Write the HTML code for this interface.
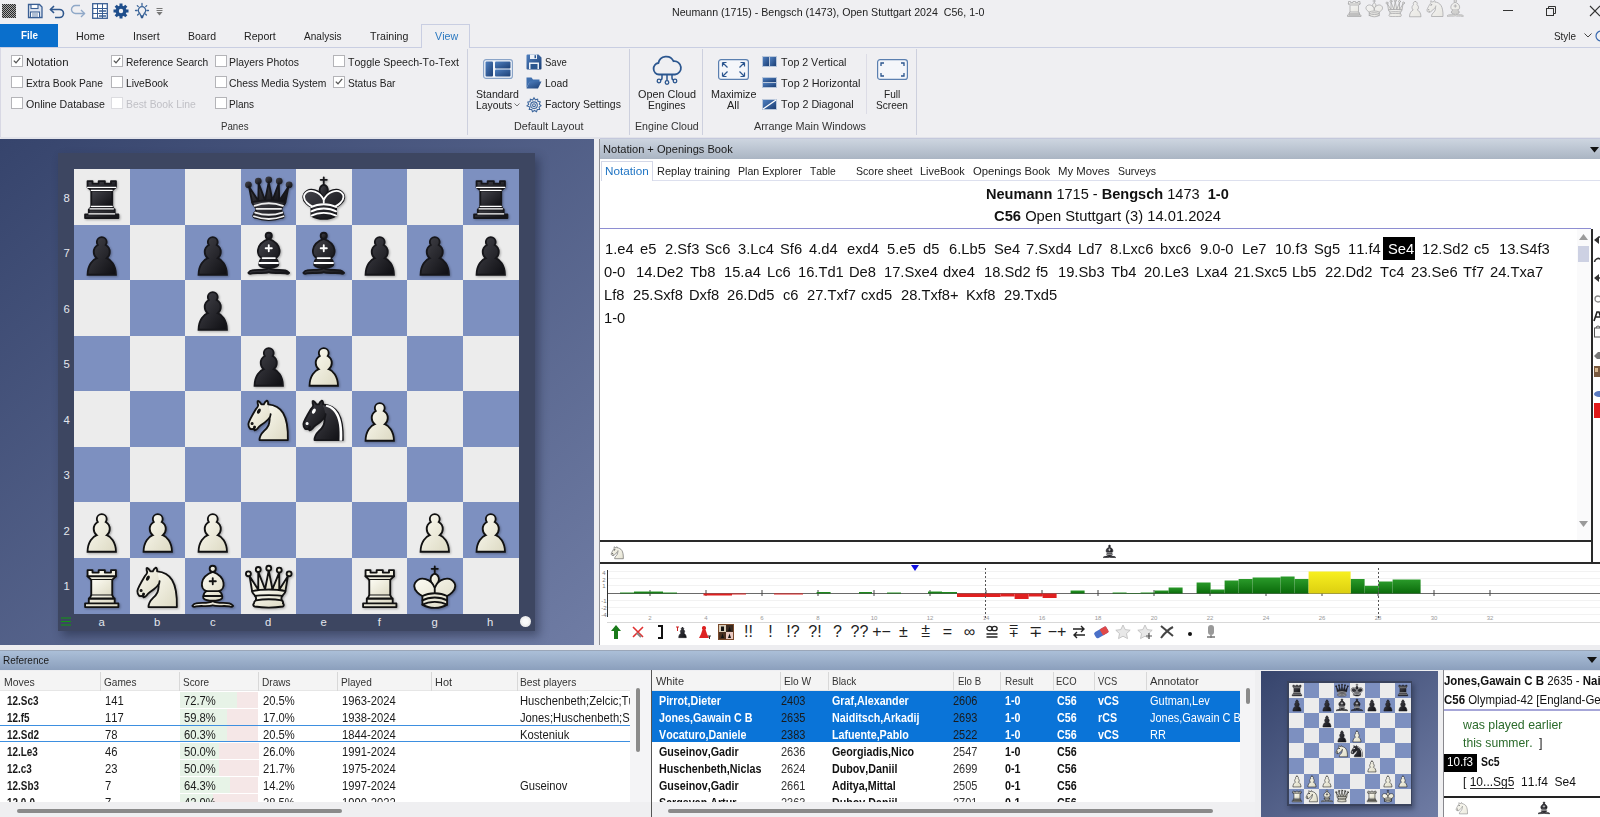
<!DOCTYPE html><html><head><meta charset="utf-8"><style>
*{margin:0;padding:0;box-sizing:border-box}
html,body{width:1600px;height:817px;overflow:hidden;background:#efeff2;font-family:"Liberation Sans",sans-serif;color:#222}
body{position:relative}
div{position:absolute}
.T{white-space:nowrap;line-height:1;transform-origin:0 0;font-kerning:none}
.T b{font-weight:bold}
svg{position:absolute;overflow:visible}
.cb{width:12px;height:12px;border:1px solid #b4b4b8;background:#fff}
</style></head><body><svg width="0" height="0" style="position:absolute"><defs><linearGradient id="gW" x1="0" y1="0" x2="1" y2="1"><stop offset="0" stop-color="#fdfcf4"/><stop offset="1" stop-color="#dcd9c2"/></linearGradient><linearGradient id="gB" x1="0" y1="0" x2="1" y2="1"><stop offset="0" stop-color="#45454c"/><stop offset="1" stop-color="#0e0e12"/></linearGradient><symbol id="wK" viewBox="0 0 45 45"><g fill="none" fill-rule="evenodd" stroke="#111" stroke-linecap="round" stroke-linejoin="round" stroke-width="1.5">
<path stroke-linejoin="miter" d="M22.5 11.63V6M20 8h5"/>
<path fill="url(#gW)" stroke-linecap="butt" stroke-linejoin="miter" d="M22.5 25s4.5-7.5 3-10.5c0 0-1-2.5-3-2.5s-3 2.5-3 2.5c-1.5 3 3 10.5 3 10.5"/>
<path fill="url(#gW)" d="M12.5 37c5.5 3.5 14.5 3.5 20 0v-7s9-4.5 6-10.5c-4-6.5-13.5-3.5-16 4V27v-3.5c-2.5-7.5-12-10.5-16-4-3 6 6 10.5 6 10.5v7"/>
<path d="M12.5 30c5.5-3 14.5-3 20 0m-20 3.5c5.5-3 14.5-3 20 0m-20 3.5c5.5-3 14.5-3 20 0"/></g></symbol><symbol id="wQ" viewBox="0 0 45 45"><g fill="url(#gW)" fill-rule="evenodd" stroke="#111" stroke-linecap="round" stroke-linejoin="round" stroke-width="1.5">
<path d="M8 12a2 2 0 1 1-4 0 2 2 0 1 1 4 0zm16.5-4.5a2 2 0 1 1-4 0 2 2 0 1 1 4 0zM41 12a2 2 0 1 1-4 0 2 2 0 1 1 4 0zM16 8.5a2 2 0 1 1-4 0 2 2 0 1 1 4 0zM33 9a2 2 0 1 1-4 0 2 2 0 1 1 4 0z"/>
<path stroke-linecap="butt" d="M9 26c8.5-1.5 21-1.5 27 0l2-12-7 11V11l-5.5 13.5-3-15-3 15-5.5-14V25L7 14l2 12z"/>
<path stroke-linecap="butt" d="M9 26c0 2 1.5 2 2.5 4 1 1.5 1 1 .5 3.5-1.5 1-1.5 2.5-1.5 2.5-1.5 1.5.5 2.5.5 2.5 6.5 1 16.5 1 23 0 0 0 1.5-1 0-2.5 0 0 .5-1.5-1-2.5-.5-2.5-.5-2 .5-3.5 1-2 2.5-2 2.5-4-8.5-1.5-18.5-1.5-27 0z"/>
<path fill="none" d="M11.5 30c3.5-1 18.5-1 22 0M12 33.5c6-1 15-1 21 0"/></g></symbol><symbol id="wR" viewBox="0 0 45 45"><g fill="url(#gW)" fill-rule="evenodd" stroke="#111" stroke-linecap="round" stroke-linejoin="round" stroke-width="1.5">
<path stroke-linecap="butt" d="M9 39h27v-3H9v3zm3-3v-4h21v4H12zm-1-22V9h4v2h5V9h5v2h5V9h4v5"/>
<path d="m34 14-3 3H14l-3-3"/>
<path stroke-linecap="butt" stroke-linejoin="miter" d="M31 17v12.5H14V17"/>
<path d="m31 29.5 1.5 2.5h-20l1.5-2.5"/>
<path fill="none" stroke-linejoin="miter" d="M11 14h23"/></g></symbol><symbol id="wB" viewBox="0 0 45 45"><g fill="none" fill-rule="evenodd" stroke="#111" stroke-linecap="round" stroke-linejoin="round" stroke-width="1.5">
<g fill="url(#gW)" stroke-linecap="butt">
<path d="M9 36c3.39-.97 10.11.43 13.5-2 3.39 2.430 10.11 1.030 13.5 2 0 0 1.65.54 3 2-.68.97-1.650.99-3 .5-3.39-.97-10.11.46-13.5-1-3.39 1.46-10.11.03-13.5 1-1.354.49-2.323.47-3-.5 1.354-1.94 3-2 3-2z"/>
<path d="M15 32c2.5 2.5 12.5 2.5 15 0 .5-1.5 0-2 0-2 0-2.5-2.5-4-2.5-4 5.5-1.5 6-11.5-5-15.5-11 4-10.5 14-5 15.5 0 0-2.5 1.5-2.5 4 0 0-.5.5 0 2z"/>
<path d="M25 8a2.5 2.5 0 1 1-5 0 2.5 2.5 0 1 1 5 0z"/></g>
<path stroke-linejoin="miter" d="M17.5 26h10M15 30h15m-7.5-14.5v5M20 18h5"/></g></symbol><symbol id="wN" viewBox="0 0 45 45"><g fill="none" fill-rule="evenodd" stroke="#111" stroke-linecap="round" stroke-linejoin="round" stroke-width="1.5">
<path fill="url(#gW)" d="M22 10c10.5 1 16.5 8 16 29H15c0-9 10-6.5 8-21"/>
<path fill="url(#gW)" d="M24 18c.38 2.91-5.55 7.37-8 9-3 2-2.82 4.34-5 4-1.042-.94 1.41-3.04 0-3-1 0 .19 1.23-1 2-1 0-4.003 1-4-4 0-2 6-12 6-12s1.89-1.9 2-3.5c-.73-.994-.5-2-.5-3 1-1 3 2.5 3 2.5h2s.78-1.992 2.5-3c1 0 1 3 1 3"/>
<path fill="#111" d="M9.5 25.5a.5.5 0 1 1-1 0 .5.5 0 1 1 1 0zm5.433-9.75a.5 1.5 30 1 1-.866-.5.5 1.5 30 1 1 .866.5z"/></g></symbol><symbol id="wP" viewBox="0 0 45 45"><path fill="url(#gW)" stroke="#111" stroke-linecap="round" stroke-width="1.5" d="M22.5 9c-2.21 0-4 1.79-4 4 0 .89.29 1.71.78 2.38C17.33 16.5 16 18.59 16 21c0 2.03.94 3.84 2.410 5.03C15.41 27.09 11 31.58 11 39.5H34c0-7.920-4.410-12.41-7.410-13.47C28.06 24.84 29 23.03 29 21c0-2.41-1.33-4.5-3.28-5.62.49-.67.78-1.49.78-2.38 0-2.210-1.79-4-4-4z"/></symbol><symbol id="bK" viewBox="0 0 45 45"><g fill="none" fill-rule="evenodd" stroke="#16161a" stroke-linecap="round" stroke-linejoin="round" stroke-width="1.5">
<path stroke-linejoin="miter" d="M22.5 11.63V6"/>
<path fill="url(#gB)" stroke-linecap="butt" stroke-linejoin="miter" d="M22.5 25s4.5-7.5 3-10.5c0 0-1-2.5-3-2.5s-3 2.5-3 2.5c-1.5 3 3 10.5 3 10.5"/>
<path fill="url(#gB)" d="M12.5 37c5.5 3.5 14.5 3.5 20 0v-7s9-4.5 6-10.5c-4-6.5-13.5-3.5-16 4V27v-3.5c-2.5-7.5-12-10.5-16-4-3 6 6 10.5 6 10.5v7"/>
<path stroke-linejoin="miter" d="M20 8h5"/>
<path stroke="#fff" d="M32 29.5s8.5-4 6.03-9.65C34.15 14 25 18 22.5 24.5v2.1-2.1C20 18 10.85 14 6.97 19.85 4.5 25.5 13 29.5 13 29.5"/>
<path stroke="#fff" d="M12.5 30c5.5-3 14.5-3 20 0m-20 3.5c5.5-3 14.5-3 20 0m-20 3.5c5.5-3 14.5-3 20 0"/></g></symbol><symbol id="bQ" viewBox="0 0 45 45"><g fill="url(#gB)" fill-rule="evenodd" stroke="#16161a" stroke-linecap="round" stroke-linejoin="round" stroke-width="1.5">
<g stroke="none"><circle cx="6" cy="12" r="2.75"/><circle cx="14" cy="9" r="2.75"/><circle cx="22.5" cy="8" r="2.75"/><circle cx="31" cy="9" r="2.75"/><circle cx="39" cy="12" r="2.75"/></g>
<path stroke-linecap="butt" d="M9 26c8.5-1.5 21-1.5 27 0l2.5-12.5L31 25l-.3-14.1-5.2 13.6-3-14.5-3 14.5-5.2-13.6L14 25 6.5 13.5 9 26z"/>
<path stroke-linecap="butt" d="M9 26c0 2 1.5 2 2.5 4 1 1.5 1 1 .5 3.5-1.5 1-1.5 2.5-1.5 2.5-1.5 1.5.5 2.5.5 2.5 6.5 1 16.5 1 23 0 0 0 1.5-1 0-2.5 0 0 .5-1.5-1-2.5-.5-2.5-.5-2 .5-3.5 1-2 2.5-2 2.5-4-8.5-1.5-18.5-1.5-27 0z"/>
<path fill="none" stroke-linecap="butt" d="M11 38.5a35 35 1 0 0 23 0"/>
<path fill="none" stroke="#ececec" d="M11 29a35 35 1 0 1 23 0m-21.5 2.5h20m-21 3a35 35 1 0 0 22 0m-23 3a35 35 1 0 0 24 0"/></g></symbol><symbol id="bR" viewBox="0 0 45 45"><g fill="url(#gB)" fill-rule="evenodd" stroke="#16161a" stroke-linecap="round" stroke-linejoin="round" stroke-width="1.5">
<path stroke-linecap="butt" d="M9 39h27v-3H9v3zm3.5-7 1.5-2.5h17l1.5 2.5h-20zm-.5 4v-4h21v4H12z"/>
<path stroke-linecap="butt" stroke-linejoin="miter" d="M14 29.5v-13h17v13H14z"/>
<path stroke-linecap="butt" d="M14 16.5 11 14h23l-3 2.5H14zM11 14V9h4v2h5V9h5v2h5V9h4v5H11z"/>
<path fill="none" stroke="#fff" stroke-linejoin="miter" stroke-width="1" d="M12 35.5h21m-20-4h19m-18-2h17m-17-13h17M11 14h23"/></g></symbol><symbol id="bB" viewBox="0 0 45 45"><g fill="none" fill-rule="evenodd" stroke="#16161a" stroke-linecap="round" stroke-linejoin="round" stroke-width="1.5">
<g fill="url(#gB)" stroke-linecap="butt">
<path d="M9 36c3.39-.97 10.11.43 13.5-2 3.39 2.43 10.11 1.03 13.5 2 0 0 1.65.54 3 2-.68.97-1.65.99-3 .5-3.39-.97-10.11.46-13.5-1-3.39 1.46-10.11.03-13.5 1-1.354.49-2.323.47-3-.5 1.354-1.94 3-2 3-2z"/>
<path d="M15 32c2.5 2.5 12.5 2.5 15 0 .5-1.5 0-2 0-2 0-2.5-2.5-4-2.5-4 5.5-1.5 6-11.5-5-15.5-11 4-10.5 14-5 15.5 0 0-2.5 1.5-2.5 4 0 0-.5.5 0 2z"/>
<path d="M25 8a2.5 2.5 0 1 1-5 0 2.5 2.5 0 1 1 5 0z"/></g>
<path stroke="#fff" stroke-linejoin="miter" d="M17.5 26h10M15 30h15m-7.5-14.5v5M20 18h5"/></g></symbol><symbol id="bN" viewBox="0 0 45 45"><g fill="none" fill-rule="evenodd" stroke="#16161a" stroke-linecap="round" stroke-linejoin="round" stroke-width="1.5">
<path fill="url(#gB)" d="M22 10c10.5 1 16.5 8 16 29H15c0-9 10-6.5 8-21"/>
<path fill="url(#gB)" d="M24 18c.38 2.91-5.55 7.37-8 9-3 2-2.82 4.34-5 4-1.042-.94 1.41-3.04 0-3-1 0 .19 1.23-1 2-1 0-4.003 1-4-4 0-2 6-12 6-12s1.89-1.9 2-3.5c-.73-.994-.5-2-.5-3 1-1 3 2.5 3 2.5h2s.78-1.992 2.5-3c1 0 1 3 1 3"/>
<path fill="#fff" stroke="#fff" d="M9.5 25.5a.5.5 0 1 1-1 0 .5.5 0 1 1 1 0zm5.433-9.75a.5 1.5 30 1 1-.866-.5.5 1.5 30 1 1 .866.5z"/>
<path fill="#fff" stroke="none" d="m24.55 10.4-.45 1.45.5.15c3.15 1 5.65 2.49 7.9 6.75S35.75 29.06 35.250 39l-.05.5h2.25l.05-.5c.5-10.06-.88-16.85-3.25-21.34-2.37-4.49-5.79-6.64-9.19-7.16l-.51-.1z"/></g></symbol><symbol id="bP" viewBox="0 0 45 45"><path fill="url(#gB)" stroke="#16161a" stroke-linecap="round" stroke-width="1.5" d="M22.5 9c-2.21 0-4 1.79-4 4 0 .89.29 1.71.78 2.38C17.33 16.5 16 18.59 16 21c0 2.03.94 3.84 2.41 5.03C15.41 27.09 11 31.58 11 39.5H34c0-7.92-4.41-12.41-7.41-13.47C28.06 24.84 29 23.03 29 21c0-2.41-1.33-4.5-3.28-5.62.49-.67.78-1.49.78-2.38 0-2.21-1.79-4-4-4z"/></symbol></defs></svg><svg style="left:2px;top:4px" width="14" height="14"><defs><pattern id="chk" width="2" height="2" patternUnits="userSpaceOnUse"><rect width="2" height="2" fill="#a8a8a8"/><rect width="1" height="1" fill="#2a2a2a"/><rect x="1" y="1" width="1" height="1" fill="#2a2a2a"/></pattern></defs><rect width="14" height="14" fill="url(#chk)"/></svg><svg style="left:27px;top:3px;" width="16" height="16" viewBox="0 0 16 16"><path d="M1.5 1.5h11l2.5 2.5v10.5h-13.5z" fill="#dde4f0" stroke="#3a5f94" stroke-width="1.3"/><rect x="4" y="1.5" width="7" height="4" fill="#fff" stroke="#3a5f94" stroke-width="1.1"/><rect x="3.5" y="9" width="9" height="5.5" fill="#fff" stroke="#3a5f94" stroke-width="1.1"/><path d="M5 11h6M5 13h6" stroke="#3a5f94" stroke-width="0.8"/></svg><svg style="left:49px;top:4px;" width="16" height="14" viewBox="0 0 16 14"><path d="M5 2L1.5 5.5 5 9" fill="none" stroke="#2f578d" stroke-width="1.6"/><path d="M1.5 5.5h9a4 4 0 0 1 0 8H6" fill="none" stroke="#2f578d" stroke-width="1.6"/></svg><svg style="left:70px;top:4px;" width="16" height="14" viewBox="0 0 16 14"><path d="M11 6L14.5 9.5 11 13" fill="none" stroke="#8fa8c8" stroke-width="1.4"/><path d="M14.5 9.5h-9a4 4 0 0 1 0-8H10" fill="none" stroke="#8fa8c8" stroke-width="1.4"/></svg><svg style="left:92px;top:3px;" width="16" height="16" viewBox="0 0 16 16"><rect x="0.7" y="0.7" width="14.6" height="14.6" fill="#fff" stroke="#3a5f94" stroke-width="1.3"/><path d="M0.7 5.5h14.6M0.7 10.5h14.6M5.5 0.7v14.6M10.5 0.7v14.6" stroke="#3a5f94" stroke-width="1"/><path d="M7 8h7M7 13h7" stroke="#3a5f94" stroke-width="1.3"/></svg><svg style="left:113px;top:3px;" width="16" height="16" viewBox="0 0 16 16"><g fill="#1f4e8c"><circle cx="8" cy="8" r="5.5"/><g stroke="#1f4e8c" stroke-width="3"><path d="M8 0.5v15M0.5 8h15M2.7 2.7l10.6 10.6M13.3 2.7L2.7 13.3"/></g></g><circle cx="8" cy="8" r="2.2" fill="#efeff2"/></svg><svg style="left:134px;top:1px;" width="16" height="19" viewBox="0 0 16 19"><g fill="none" stroke="#3a6499" stroke-width="1.3" stroke-linecap="round"><path d="M5.6 12.2A3.7 3.7 0 1 1 10.4 12.2L9 15H7z"/><path d="M1.5 9.5h1.6M12.9 9.5h1.6M8 2.5v2M3.3 4.6l1 1M12.7 4.6l-1 1M3.6 14l1-1M12.4 14l-1-1"/></g><path d="M6.8 15h2.4v1.5l-1.2 1.3-1.2-1.3z" fill="#2f578d"/></svg><svg style="left:156px;top:8px;" width="7" height="8" viewBox="0 0 7 8"><path d="M0.5 0.5h6M0.5 2.5h6" stroke="#777" stroke-width="1"/><path d="M0.5 4h6L3.5 7.5z" fill="#777"/></svg><div class="T" style="left:672.00px;top:6.76px;font-size:11.5px;color:#222;transform:scaleX(0.9241);white-space:pre">Neumann (1715) - Bengsch (1473), Open Stuttgart 2024  C56, 1-0</div><svg style="left:1343.2px;top:-3.5px;opacity:0.33" width="22.5" height="22.5"><use href="#wR"/></svg><svg style="left:1363.3px;top:-3.5px;opacity:0.33" width="22.5" height="22.5"><use href="#wK"/></svg><svg style="left:1383.5px;top:-3.5px;opacity:0.33" width="22.5" height="22.5"><use href="#wQ"/></svg><svg style="left:1403.5px;top:-3.5px;opacity:0.33" width="22.5" height="22.5"><use href="#wP"/></svg><svg style="left:1423.7px;top:-3.5px;opacity:0.33" width="22.5" height="22.5"><use href="#wN"/></svg><svg style="left:1443.8px;top:-3.5px;opacity:0.33" width="22.5" height="22.5"><use href="#wB"/></svg><div style="left:1503px;top:10px;width:10px;height:1px;background:#333"></div><svg style="left:1546px;top:6px;" width="10" height="10" viewBox="0 0 10 10"><path d="M2.5 2.5V0.5h7v7h-2" fill="none" stroke="#333" stroke-width="1"/><rect x="0.5" y="2.5" width="7" height="7" fill="none" stroke="#333" stroke-width="1"/></svg><svg style="left:1589px;top:5px;" width="12" height="12" viewBox="0 0 12 12"><path d="M1 1l10 10M11 1L1 11" stroke="#333" stroke-width="1.1"/></svg><div style="left:0px;top:47px;width:1600px;height:1px;background:#c9cee2"></div><div style="left:0px;top:24px;width:57.5px;height:23px;background:#0a6fcc"></div><div class="T" style="left:20.70px;top:29.76px;font-size:11.5px;color:#fff;transform:scaleX(0.8570);"><b>File</b></div><div class="T" style="left:76.00px;top:30.93px;font-size:11.3px;color:#222;transform:scaleX(0.9512);">Home</div><div class="T" style="left:132.80px;top:30.93px;font-size:11.3px;color:#222;transform:scaleX(0.9416);">Insert</div><div class="T" style="left:187.50px;top:30.93px;font-size:11.3px;color:#222;transform:scaleX(0.9280);">Board</div><div class="T" style="left:243.75px;top:30.93px;font-size:11.3px;color:#222;transform:scaleX(0.9366);">Report</div><div class="T" style="left:303.75px;top:30.93px;font-size:11.3px;color:#222;transform:scaleX(0.8909);">Analysis</div><div class="T" style="left:369.50px;top:30.93px;font-size:11.3px;color:#222;transform:scaleX(0.9407);">Training</div><div style="left:421px;top:24px;width:49px;height:24px;background:#efeff2;border:1px solid #c9cee2;border-bottom:none"></div><div class="T" style="left:435.00px;top:30.93px;font-size:11.3px;color:#2a78c0;transform:scaleX(0.9467);">View</div><div class="T" style="left:1553.75px;top:30.93px;font-size:11.3px;color:#222;transform:scaleX(0.8750);">Style</div><svg style="left:1595px;top:30px;" width="10" height="12" viewBox="0 0 10 12"><circle cx="6" cy="6" r="5" fill="none" stroke="#3a6ab0" stroke-width="1.2"/></svg><svg style="left:1584px;top:33px;" width="8" height="5" viewBox="0 0 8 5"><path d="M0.5 0.5L4 4 7.5 0.5" fill="none" stroke="#444" stroke-width="1"/></svg><div style="left:0px;top:48px;width:1px;height:89px;background:#d8d8e4"></div><div class="cb" style="left:11px;top:55px;"></div><svg style="left:13px;top:57px;" width="8" height="7" viewBox="0 0 8 7"><path d="M0.8 3.6L3 5.8 7.2 0.8" fill="none" stroke="#555" stroke-width="1.3"/></svg><div class="T" style="left:25.50px;top:56.93px;font-size:11.3px;color:#222;transform:scaleX(1.0097);">Notation</div><div class="cb" style="left:11px;top:76px;"></div><div class="T" style="left:25.50px;top:77.93px;font-size:11.3px;color:#222;transform:scaleX(0.9079);">Extra Book Pane</div><div class="cb" style="left:11px;top:97px;"></div><div class="T" style="left:25.50px;top:98.93px;font-size:11.3px;color:#222;transform:scaleX(0.9384);">Online Database</div><div class="cb" style="left:111px;top:55px;"></div><svg style="left:113px;top:57px;" width="8" height="7" viewBox="0 0 8 7"><path d="M0.8 3.6L3 5.8 7.2 0.8" fill="none" stroke="#555" stroke-width="1.3"/></svg><div class="T" style="left:125.75px;top:56.93px;font-size:11.3px;color:#222;transform:scaleX(0.9031);">Reference Search</div><div class="cb" style="left:111px;top:76px;"></div><div class="T" style="left:125.75px;top:77.93px;font-size:11.3px;color:#222;transform:scaleX(0.9075);">LiveBook</div><div class="cb" style="left:111px;top:97px;border-color:#dcdce0"></div><div class="T" style="left:125.75px;top:98.93px;font-size:11.3px;color:#c0c0c6;transform:scaleX(0.9179);">Best Book Line</div><div class="cb" style="left:214.5px;top:55px;"></div><div class="T" style="left:229.25px;top:56.93px;font-size:11.3px;color:#222;transform:scaleX(0.9211);">Players Photos</div><div class="cb" style="left:214.5px;top:76px;"></div><div class="T" style="left:229.25px;top:77.93px;font-size:11.3px;color:#222;transform:scaleX(0.9130);">Chess Media System</div><div class="cb" style="left:214.5px;top:97px;"></div><div class="T" style="left:229.25px;top:98.93px;font-size:11.3px;color:#222;transform:scaleX(0.8850);">Plans</div><div class="cb" style="left:333px;top:55px;"></div><div class="T" style="left:348.00px;top:56.93px;font-size:11.3px;color:#222;transform:scaleX(0.9350);">Toggle Speech-To-Text</div><div class="cb" style="left:333px;top:76px;"></div><svg style="left:335px;top:78px;" width="8" height="7" viewBox="0 0 8 7"><path d="M0.8 3.6L3 5.8 7.2 0.8" fill="none" stroke="#555" stroke-width="1.3"/></svg><div class="T" style="left:348.00px;top:77.93px;font-size:11.3px;color:#222;transform:scaleX(0.9001);">Status Bar</div><div class="T" style="left:221.25px;top:120.93px;font-size:11.3px;color:#333;transform:scaleX(0.8584);">Panes</div><div style="left:466.5px;top:49px;width:1.3px;height:86px;background:#cdd0de"></div><div style="left:629px;top:49px;width:1.3px;height:86px;background:#cdd0de"></div><div style="left:702px;top:49px;width:1.3px;height:86px;background:#cdd0de"></div><div style="left:916px;top:49px;width:1.3px;height:86px;background:#cdd0de"></div><div style="left:865.5px;top:54px;width:1px;height:60px;background:#dcdce6"></div><svg style="left:483px;top:59px;" width="30" height="20" viewBox="0 0 30 20"><defs><linearGradient id="bl" x1="0" y1="0" x2="1" y2="1"><stop offset="0" stop-color="#4f7fbf"/><stop offset="1" stop-color="#1c3f75"/></linearGradient></defs><rect x="0.6" y="0.6" width="28.8" height="18.8" rx="2.5" fill="#f3f6fb" stroke="#8aa4c8" stroke-width="1.2"/><rect x="2.5" y="2.5" width="7.5" height="15" rx="1" fill="url(#bl)"/><rect x="12" y="2.5" width="15.5" height="7" rx="1" fill="url(#bl)"/><rect x="12" y="10.5" width="15.5" height="7" rx="1" fill="url(#bl)"/></svg><div class="T" style="left:476.25px;top:88.93px;font-size:11.3px;color:#222;transform:scaleX(0.9373);">Standard</div><div class="T" style="left:475.50px;top:99.93px;font-size:11.3px;color:#222;transform:scaleX(0.9153);">Layouts</div><svg style="left:514px;top:103px;" width="6" height="4" viewBox="0 0 6 4"><path d="M0.5 0.5L3 3 5.5 0.5" fill="none" stroke="#666" stroke-width="0.9"/></svg><svg style="left:526px;top:54px;" width="16" height="16" viewBox="0 0 16 16"><defs><linearGradient id="bl2" x1="0" y1="0" x2="1" y2="1"><stop offset="0" stop-color="#4f7fbf"/><stop offset="1" stop-color="#1c3f75"/></linearGradient></defs><path d="M0.5 1.5a1 1 0 0 1 1-1h11l3 3v11a1 1 0 0 1-1 1h-13a1 1 0 0 1-1-1z" fill="url(#bl2)"/><rect x="4" y="0.5" width="7" height="4.5" fill="#eef2f8"/><rect x="8.5" y="1.2" width="1.5" height="3" fill="#2b568f"/><rect x="3" y="8.5" width="10" height="6.5" fill="#eef2f8"/><rect x="4.5" y="10" width="7" height="5" fill="#2b568f"/></svg><div class="T" style="left:544.50px;top:56.93px;font-size:11.3px;color:#222;transform:scaleX(0.8442);">Save</div><svg style="left:526px;top:77px;" width="16" height="12" viewBox="0 0 16 12"><path d="M0.5 0.5h5l1.5 2h6.5v2.5H3.5L0.5 11z" fill="#3f6fae"/><path d="M3.5 4.5h12L12 11.5H0.5z" fill="url(#bl2)"/></svg><div class="T" style="left:544.50px;top:77.93px;font-size:11.3px;color:#222;transform:scaleX(0.9148);">Load</div><svg style="left:526px;top:97px;" width="16" height="16" viewBox="0 0 16 16"><g fill="none" stroke="#3d679e" stroke-width="1.1"><path d="M8 0.8l1.3 2 2.3-.7.3 2.3 2.3.5-.9 2.2 1.7 1.6-1.9 1.4.6 2.3-2.4.1-.8 2.2-2-1.2-2 1.2-.8-2.2-2.4-.1.6-2.3L1 8.9 2.7 7.3l-.9-2.2 2.3-.5.3-2.3 2.3.7z"/><circle cx="8" cy="8.2" r="3.3"/><circle cx="8" cy="8.2" r="1.4"/></g></svg><div class="T" style="left:544.50px;top:98.93px;font-size:11.3px;color:#222;transform:scaleX(0.9309);">Factory Settings</div><div class="T" style="left:514.25px;top:120.93px;font-size:11.3px;color:#333;transform:scaleX(0.9536);">Default Layout</div><svg style="left:651px;top:54px;" width="32" height="32" viewBox="0 0 32 32"><path d="M8 20.5a5.8 5.8 0 0 1-.6-11.5A8 8 0 0 1 22.5 7.2a6.5 6.5 0 0 1 1.5 13.3z" fill="none" stroke="#2b568f" stroke-width="1.8"/><path d="M11 20.5v3.5a2 2 0 0 1-2 2M16 20.5v6M21 20.5v3.5a2 2 0 0 0 2 2" fill="none" stroke="#2b568f" stroke-width="1.5"/><circle cx="8" cy="27" r="1.8" fill="none" stroke="#2b568f" stroke-width="1.3"/><circle cx="16" cy="28.5" r="1.8" fill="none" stroke="#2b568f" stroke-width="1.3"/><circle cx="24" cy="27" r="1.8" fill="none" stroke="#2b568f" stroke-width="1.3"/></svg><div class="T" style="left:637.50px;top:88.93px;font-size:11.3px;color:#222;transform:scaleX(0.9621);">Open Cloud</div><div class="T" style="left:647.50px;top:99.93px;font-size:11.3px;color:#222;transform:scaleX(0.9180);">Engines</div><div class="T" style="left:634.50px;top:120.93px;font-size:11.3px;color:#333;transform:scaleX(0.9395);">Engine Cloud</div><svg style="left:718px;top:59px;" width="31" height="21" viewBox="0 0 31 21"><rect x="0.6" y="0.6" width="29.8" height="19.8" rx="2.5" fill="#f4f6fa" stroke="#5a7fb0" stroke-width="1.2"/><g stroke="#2b568f" stroke-width="1.2" fill="none"><path d="M4.5 3.5l5 5M4.5 3.5h4M4.5 3.5v4M26.5 3.5l-5 5M26.5 3.5h-4M26.5 3.5v4M4.5 17.5l5-5M4.5 17.5h4M4.5 17.5v-4M26.5 17.5l-5-5M26.5 17.5h-4M26.5 17.5v-4"/></g></svg><div class="T" style="left:710.75px;top:88.93px;font-size:11.3px;color:#222;transform:scaleX(0.9530);">Maximize</div><div class="T" style="left:727.00px;top:99.93px;font-size:11.3px;color:#222;transform:scaleX(0.9766);">All</div><svg style="left:762px;top:56px;" width="15" height="11" viewBox="0 0 15 11"><rect width="15" height="11" fill="#b8c6da"/><rect x="1" y="1" width="6" height="9" fill="url(#bl2)"/><rect x="8" y="1" width="6" height="9" fill="url(#bl2)"/></svg><div class="T" style="left:780.50px;top:56.93px;font-size:11.3px;color:#222;transform:scaleX(0.9395);">Top 2 Vertical</div><svg style="left:762px;top:77px;" width="15" height="11" viewBox="0 0 15 11"><rect width="15" height="11" fill="#b8c6da"/><rect x="1" y="1" width="13" height="4" fill="url(#bl2)"/><rect x="1" y="6" width="13" height="4" fill="url(#bl2)"/></svg><div class="T" style="left:780.50px;top:77.93px;font-size:11.3px;color:#222;transform:scaleX(0.9584);">Top 2 Horizontal</div><svg style="left:762px;top:99px;" width="15" height="11" viewBox="0 0 15 11"><rect width="15" height="11" fill="#b8c6da"/><rect x="1" y="1" width="13" height="9" fill="url(#bl2)"/><path d="M1 10L14 1" stroke="#fff" stroke-width="1.3"/></svg><div class="T" style="left:780.50px;top:98.93px;font-size:11.3px;color:#222;transform:scaleX(0.9486);">Top 2 Diagonal</div><div class="T" style="left:753.75px;top:120.93px;font-size:11.3px;color:#333;transform:scaleX(0.9586);">Arrange Main Windows</div><svg style="left:877px;top:59px;" width="31" height="21" viewBox="0 0 31 21"><rect x="0.6" y="0.6" width="29.8" height="19.8" rx="2.5" fill="#f4f6fa" stroke="#5a7fb0" stroke-width="1.2"/><g stroke="#2b568f" stroke-width="1.3" fill="none"><path d="M4 7V4h3M27 7V4h-3M4 14v3h3M27 14v3h-3"/></g></svg><div class="T" style="left:883.75px;top:88.93px;font-size:11.3px;color:#222;transform:scaleX(0.8932);">Full</div><div class="T" style="left:875.50px;top:99.93px;font-size:11.3px;color:#222;transform:scaleX(0.8933);">Screen</div><div style="left:0px;top:137px;width:1600px;height:2px;background:#e2e3ea"></div><div style="left:0px;top:139px;width:594px;height:506px;background:linear-gradient(to bottom right,#36446c,#6f7ca4)"></div><div style="left:58px;top:153px;width:477px;height:478px;background:#3d4661;box-shadow:4px 5px 9px rgba(25,30,50,0.45)"></div><div style="left:74.00px;top:169.00px;width:56.00px;height:56.00px;background:#ececec"></div><div style="left:129.50px;top:169.00px;width:56.00px;height:56.00px;background:#7d90c0"></div><div style="left:185.00px;top:169.00px;width:56.00px;height:56.00px;background:#ececec"></div><div style="left:240.50px;top:169.00px;width:56.00px;height:56.00px;background:#7d90c0"></div><div style="left:296.00px;top:169.00px;width:56.00px;height:56.00px;background:#ececec"></div><div style="left:351.50px;top:169.00px;width:56.00px;height:56.00px;background:#7d90c0"></div><div style="left:407.00px;top:169.00px;width:56.00px;height:56.00px;background:#ececec"></div><div style="left:462.50px;top:169.00px;width:56.00px;height:56.00px;background:#7d90c0"></div><div style="left:74.00px;top:224.50px;width:56.00px;height:56.00px;background:#7d90c0"></div><div style="left:129.50px;top:224.50px;width:56.00px;height:56.00px;background:#ececec"></div><div style="left:185.00px;top:224.50px;width:56.00px;height:56.00px;background:#7d90c0"></div><div style="left:240.50px;top:224.50px;width:56.00px;height:56.00px;background:#ececec"></div><div style="left:296.00px;top:224.50px;width:56.00px;height:56.00px;background:#7d90c0"></div><div style="left:351.50px;top:224.50px;width:56.00px;height:56.00px;background:#ececec"></div><div style="left:407.00px;top:224.50px;width:56.00px;height:56.00px;background:#7d90c0"></div><div style="left:462.50px;top:224.50px;width:56.00px;height:56.00px;background:#ececec"></div><div style="left:74.00px;top:280.00px;width:56.00px;height:56.00px;background:#ececec"></div><div style="left:129.50px;top:280.00px;width:56.00px;height:56.00px;background:#7d90c0"></div><div style="left:185.00px;top:280.00px;width:56.00px;height:56.00px;background:#ececec"></div><div style="left:240.50px;top:280.00px;width:56.00px;height:56.00px;background:#7d90c0"></div><div style="left:296.00px;top:280.00px;width:56.00px;height:56.00px;background:#ececec"></div><div style="left:351.50px;top:280.00px;width:56.00px;height:56.00px;background:#7d90c0"></div><div style="left:407.00px;top:280.00px;width:56.00px;height:56.00px;background:#ececec"></div><div style="left:462.50px;top:280.00px;width:56.00px;height:56.00px;background:#7d90c0"></div><div style="left:74.00px;top:335.50px;width:56.00px;height:56.00px;background:#7d90c0"></div><div style="left:129.50px;top:335.50px;width:56.00px;height:56.00px;background:#ececec"></div><div style="left:185.00px;top:335.50px;width:56.00px;height:56.00px;background:#7d90c0"></div><div style="left:240.50px;top:335.50px;width:56.00px;height:56.00px;background:#ececec"></div><div style="left:296.00px;top:335.50px;width:56.00px;height:56.00px;background:#7d90c0"></div><div style="left:351.50px;top:335.50px;width:56.00px;height:56.00px;background:#ececec"></div><div style="left:407.00px;top:335.50px;width:56.00px;height:56.00px;background:#7d90c0"></div><div style="left:462.50px;top:335.50px;width:56.00px;height:56.00px;background:#ececec"></div><div style="left:74.00px;top:391.00px;width:56.00px;height:56.00px;background:#ececec"></div><div style="left:129.50px;top:391.00px;width:56.00px;height:56.00px;background:#7d90c0"></div><div style="left:185.00px;top:391.00px;width:56.00px;height:56.00px;background:#ececec"></div><div style="left:240.50px;top:391.00px;width:56.00px;height:56.00px;background:#7d90c0"></div><div style="left:296.00px;top:391.00px;width:56.00px;height:56.00px;background:#ececec"></div><div style="left:351.50px;top:391.00px;width:56.00px;height:56.00px;background:#7d90c0"></div><div style="left:407.00px;top:391.00px;width:56.00px;height:56.00px;background:#ececec"></div><div style="left:462.50px;top:391.00px;width:56.00px;height:56.00px;background:#7d90c0"></div><div style="left:74.00px;top:446.50px;width:56.00px;height:56.00px;background:#7d90c0"></div><div style="left:129.50px;top:446.50px;width:56.00px;height:56.00px;background:#ececec"></div><div style="left:185.00px;top:446.50px;width:56.00px;height:56.00px;background:#7d90c0"></div><div style="left:240.50px;top:446.50px;width:56.00px;height:56.00px;background:#ececec"></div><div style="left:296.00px;top:446.50px;width:56.00px;height:56.00px;background:#7d90c0"></div><div style="left:351.50px;top:446.50px;width:56.00px;height:56.00px;background:#ececec"></div><div style="left:407.00px;top:446.50px;width:56.00px;height:56.00px;background:#7d90c0"></div><div style="left:462.50px;top:446.50px;width:56.00px;height:56.00px;background:#ececec"></div><div style="left:74.00px;top:502.00px;width:56.00px;height:56.00px;background:#ececec"></div><div style="left:129.50px;top:502.00px;width:56.00px;height:56.00px;background:#7d90c0"></div><div style="left:185.00px;top:502.00px;width:56.00px;height:56.00px;background:#ececec"></div><div style="left:240.50px;top:502.00px;width:56.00px;height:56.00px;background:#7d90c0"></div><div style="left:296.00px;top:502.00px;width:56.00px;height:56.00px;background:#ececec"></div><div style="left:351.50px;top:502.00px;width:56.00px;height:56.00px;background:#7d90c0"></div><div style="left:407.00px;top:502.00px;width:56.00px;height:56.00px;background:#ececec"></div><div style="left:462.50px;top:502.00px;width:56.00px;height:56.00px;background:#7d90c0"></div><div style="left:74.00px;top:557.50px;width:56.00px;height:56.00px;background:#7d90c0"></div><div style="left:129.50px;top:557.50px;width:56.00px;height:56.00px;background:#ececec"></div><div style="left:185.00px;top:557.50px;width:56.00px;height:56.00px;background:#7d90c0"></div><div style="left:240.50px;top:557.50px;width:56.00px;height:56.00px;background:#ececec"></div><div style="left:296.00px;top:557.50px;width:56.00px;height:56.00px;background:#7d90c0"></div><div style="left:351.50px;top:557.50px;width:56.00px;height:56.00px;background:#ececec"></div><div style="left:407.00px;top:557.50px;width:56.00px;height:56.00px;background:#7d90c0"></div><div style="left:462.50px;top:557.50px;width:56.00px;height:56.00px;background:#ececec"></div><svg style="left:74.00px;top:170.00px;filter:drop-shadow(1.5px 1.5px 1px rgba(0,0,0,0.3))" width="55.50" height="55.50"><use href="#bR"/></svg><svg style="left:240.50px;top:170.00px;filter:drop-shadow(1.5px 1.5px 1px rgba(0,0,0,0.3))" width="55.50" height="55.50"><use href="#bQ"/></svg><svg style="left:296.00px;top:170.00px;filter:drop-shadow(1.5px 1.5px 1px rgba(0,0,0,0.3))" width="55.50" height="55.50"><use href="#bK"/></svg><svg style="left:462.50px;top:170.00px;filter:drop-shadow(1.5px 1.5px 1px rgba(0,0,0,0.3))" width="55.50" height="55.50"><use href="#bR"/></svg><svg style="left:74.00px;top:225.50px;filter:drop-shadow(1.5px 1.5px 1px rgba(0,0,0,0.3))" width="55.50" height="55.50"><use href="#bP"/></svg><svg style="left:185.00px;top:225.50px;filter:drop-shadow(1.5px 1.5px 1px rgba(0,0,0,0.3))" width="55.50" height="55.50"><use href="#bP"/></svg><svg style="left:240.50px;top:225.50px;filter:drop-shadow(1.5px 1.5px 1px rgba(0,0,0,0.3))" width="55.50" height="55.50"><use href="#bB"/></svg><svg style="left:296.00px;top:225.50px;filter:drop-shadow(1.5px 1.5px 1px rgba(0,0,0,0.3))" width="55.50" height="55.50"><use href="#bB"/></svg><svg style="left:351.50px;top:225.50px;filter:drop-shadow(1.5px 1.5px 1px rgba(0,0,0,0.3))" width="55.50" height="55.50"><use href="#bP"/></svg><svg style="left:407.00px;top:225.50px;filter:drop-shadow(1.5px 1.5px 1px rgba(0,0,0,0.3))" width="55.50" height="55.50"><use href="#bP"/></svg><svg style="left:462.50px;top:225.50px;filter:drop-shadow(1.5px 1.5px 1px rgba(0,0,0,0.3))" width="55.50" height="55.50"><use href="#bP"/></svg><svg style="left:185.00px;top:281.00px;filter:drop-shadow(1.5px 1.5px 1px rgba(0,0,0,0.3))" width="55.50" height="55.50"><use href="#bP"/></svg><svg style="left:240.50px;top:336.50px;filter:drop-shadow(1.5px 1.5px 1px rgba(0,0,0,0.3))" width="55.50" height="55.50"><use href="#bP"/></svg><svg style="left:296.00px;top:336.50px;filter:drop-shadow(1.5px 1.5px 1px rgba(0,0,0,0.3))" width="55.50" height="55.50"><use href="#wP"/></svg><svg style="left:240.50px;top:392.00px;filter:drop-shadow(1.5px 1.5px 1px rgba(0,0,0,0.3))" width="55.50" height="55.50"><use href="#wN"/></svg><svg style="left:296.00px;top:392.00px;filter:drop-shadow(1.5px 1.5px 1px rgba(0,0,0,0.3))" width="55.50" height="55.50"><use href="#bN"/></svg><svg style="left:351.50px;top:392.00px;filter:drop-shadow(1.5px 1.5px 1px rgba(0,0,0,0.3))" width="55.50" height="55.50"><use href="#wP"/></svg><svg style="left:74.00px;top:503.00px;filter:drop-shadow(1.5px 1.5px 1px rgba(0,0,0,0.3))" width="55.50" height="55.50"><use href="#wP"/></svg><svg style="left:129.50px;top:503.00px;filter:drop-shadow(1.5px 1.5px 1px rgba(0,0,0,0.3))" width="55.50" height="55.50"><use href="#wP"/></svg><svg style="left:185.00px;top:503.00px;filter:drop-shadow(1.5px 1.5px 1px rgba(0,0,0,0.3))" width="55.50" height="55.50"><use href="#wP"/></svg><svg style="left:407.00px;top:503.00px;filter:drop-shadow(1.5px 1.5px 1px rgba(0,0,0,0.3))" width="55.50" height="55.50"><use href="#wP"/></svg><svg style="left:462.50px;top:503.00px;filter:drop-shadow(1.5px 1.5px 1px rgba(0,0,0,0.3))" width="55.50" height="55.50"><use href="#wP"/></svg><svg style="left:74.00px;top:558.50px;filter:drop-shadow(1.5px 1.5px 1px rgba(0,0,0,0.3))" width="55.50" height="55.50"><use href="#wR"/></svg><svg style="left:129.50px;top:558.50px;filter:drop-shadow(1.5px 1.5px 1px rgba(0,0,0,0.3))" width="55.50" height="55.50"><use href="#wN"/></svg><svg style="left:185.00px;top:558.50px;filter:drop-shadow(1.5px 1.5px 1px rgba(0,0,0,0.3))" width="55.50" height="55.50"><use href="#wB"/></svg><svg style="left:240.50px;top:558.50px;filter:drop-shadow(1.5px 1.5px 1px rgba(0,0,0,0.3))" width="55.50" height="55.50"><use href="#wQ"/></svg><svg style="left:351.50px;top:558.50px;filter:drop-shadow(1.5px 1.5px 1px rgba(0,0,0,0.3))" width="55.50" height="55.50"><use href="#wR"/></svg><svg style="left:407.00px;top:558.50px;filter:drop-shadow(1.5px 1.5px 1px rgba(0,0,0,0.3))" width="55.50" height="55.50"><use href="#wK"/></svg><div class="T" style="left:63.50px;top:192.93px;font-size:11.3px;color:#e4e6ee;transform:scaleX(1.0000);">8</div><div class="T" style="left:63.50px;top:247.93px;font-size:11.3px;color:#e4e6ee;transform:scaleX(1.0000);">7</div><div class="T" style="left:63.50px;top:303.93px;font-size:11.3px;color:#e4e6ee;transform:scaleX(1.0000);">6</div><div class="T" style="left:63.50px;top:358.93px;font-size:11.3px;color:#e4e6ee;transform:scaleX(1.0000);">5</div><div class="T" style="left:63.50px;top:414.93px;font-size:11.3px;color:#e4e6ee;transform:scaleX(1.0000);">4</div><div class="T" style="left:63.50px;top:469.93px;font-size:11.3px;color:#e4e6ee;transform:scaleX(1.0000);">3</div><div class="T" style="left:63.50px;top:525.93px;font-size:11.3px;color:#e4e6ee;transform:scaleX(1.0000);">2</div><div class="T" style="left:63.50px;top:580.93px;font-size:11.3px;color:#e4e6ee;transform:scaleX(1.0000);">1</div><div class="T" style="left:98.59px;top:616.93px;font-size:11.3px;color:#e4e6ee;transform:scaleX(1.0000);">a</div><div class="T" style="left:154.11px;top:616.93px;font-size:11.3px;color:#e4e6ee;transform:scaleX(1.0000);">b</div><div class="T" style="left:209.93px;top:616.93px;font-size:11.3px;color:#e4e6ee;transform:scaleX(1.0000);">c</div><div class="T" style="left:265.11px;top:616.93px;font-size:11.3px;color:#e4e6ee;transform:scaleX(1.0000);">d</div><div class="T" style="left:320.61px;top:616.93px;font-size:11.3px;color:#e4e6ee;transform:scaleX(1.0000);">e</div><div class="T" style="left:377.67px;top:616.93px;font-size:11.3px;color:#e4e6ee;transform:scaleX(1.0000);">f</div><div class="T" style="left:431.61px;top:616.93px;font-size:11.3px;color:#e4e6ee;transform:scaleX(1.0000);">g</div><div class="T" style="left:487.11px;top:616.93px;font-size:11.3px;color:#e4e6ee;transform:scaleX(1.0000);">h</div><svg style="left:61px;top:617px;" width="11" height="9" viewBox="0 0 11 9"><path d="M0 1h10M0 4.5h10M0 8h10" stroke="#139a13" stroke-width="1.2"/></svg><div style="left:520px;top:616px;width:11px;height:11px;border-radius:50%;background:radial-gradient(circle,#fafafa 30%,#dcdcdc)"></div><div style="left:594px;top:139px;width:5px;height:506px;background:#ededf0"></div><div style="left:599px;top:139px;width:1px;height:506px;background:#909096"></div><div style="left:600px;top:137.8px;width:1000px;height:21px;background:linear-gradient(#cdd5e0,#aab5c3);border-top:1px solid #c4c8dc"></div><div class="T" style="left:602.60px;top:143.93px;font-size:11.3px;color:#1a1a1a;transform:scaleX(0.9814);">Notation + Openings Book</div><svg style="left:1589.5px;top:147px;" width="9" height="5.5" viewBox="0 0 9 5.5"><path d="M0 0h9L4.5 5.5z" fill="#111"/></svg><div style="left:600px;top:159px;width:1000px;height:486px;background:#fff"></div><div style="left:601px;top:161px;width:52px;height:20px;background:#fff;border:1px solid #d4d8e8;border-bottom:none"></div><div style="left:653px;top:180px;width:947px;height:1px;background:#dde0ee"></div><div class="T" style="left:605.00px;top:165.93px;font-size:11.3px;color:#1f74c4;transform:scaleX(1.0382);">Notation</div><div class="T" style="left:656.50px;top:165.93px;font-size:11.3px;color:#222;transform:scaleX(0.9712);">Replay training</div><div class="T" style="left:738.00px;top:165.93px;font-size:11.3px;color:#222;transform:scaleX(0.9402);">Plan Explorer</div><div class="T" style="left:810.10px;top:165.93px;font-size:11.3px;color:#222;transform:scaleX(0.9109);">Table</div><div class="T" style="left:855.70px;top:165.93px;font-size:11.3px;color:#222;transform:scaleX(0.9355);">Score sheet</div><div class="T" style="left:920.20px;top:165.93px;font-size:11.3px;color:#222;transform:scaleX(0.9623);">LiveBook</div><div class="T" style="left:972.60px;top:165.93px;font-size:11.3px;color:#222;transform:scaleX(0.9994);">Openings Book</div><div class="T" style="left:1058.10px;top:165.93px;font-size:11.3px;color:#222;transform:scaleX(1.0064);">My Moves</div><div class="T" style="left:1118.10px;top:165.93px;font-size:11.3px;color:#222;transform:scaleX(0.9291);">Surveys</div><div class="T" style="left:986.20px;top:186.97px;font-size:14.8px;color:#111;transform:scaleX(0.9839);white-space:pre"><b>Neumann</b> 1715 - <b>Bengsch</b> 1473  <b>1-0</b></div><div class="T" style="left:994.30px;top:208.97px;font-size:14.8px;color:#111;transform:scaleX(0.9960);white-space:pre"><b>C56</b> Open Stuttgart (3) 14.01.2024</div><div style="left:600px;top:228px;width:991px;height:1.3px;background:#8e8ed2"></div><div class="T" style="left:604.60px;top:241.38px;font-size:15.5px;color:#111;transform:scaleX(0.9490);">1.e4</div><div class="T" style="left:640.00px;top:241.38px;font-size:15.5px;color:#111;transform:scaleX(0.9490);">e5</div><div class="T" style="left:664.60px;top:241.38px;font-size:15.5px;color:#111;transform:scaleX(0.9490);">2.Sf3</div><div class="T" style="left:705.10px;top:241.38px;font-size:15.5px;color:#111;transform:scaleX(0.9490);">Sc6</div><div class="T" style="left:737.50px;top:241.38px;font-size:15.5px;color:#111;transform:scaleX(0.9490);">3.Lc4</div><div class="T" style="left:779.80px;top:241.38px;font-size:15.5px;color:#111;transform:scaleX(0.9490);">Sf6</div><div class="T" style="left:808.90px;top:241.38px;font-size:15.5px;color:#111;transform:scaleX(0.9490);">4.d4</div><div class="T" style="left:846.90px;top:241.38px;font-size:15.5px;color:#111;transform:scaleX(0.9490);">exd4</div><div class="T" style="left:887.30px;top:241.38px;font-size:15.5px;color:#111;transform:scaleX(0.9490);">5.e5</div><div class="T" style="left:922.80px;top:241.38px;font-size:15.5px;color:#111;transform:scaleX(0.9490);">d5</div><div class="T" style="left:948.80px;top:241.38px;font-size:15.5px;color:#111;transform:scaleX(0.9490);">6.Lb5</div><div class="T" style="left:993.50px;top:241.38px;font-size:15.5px;color:#111;transform:scaleX(0.9490);">Se4</div><div class="T" style="left:1025.50px;top:241.38px;font-size:15.5px;color:#111;transform:scaleX(0.9490);">7.Sxd4</div><div class="T" style="left:1077.60px;top:241.38px;font-size:15.5px;color:#111;transform:scaleX(0.9490);">Ld7</div><div class="T" style="left:1109.90px;top:241.38px;font-size:15.5px;color:#111;transform:scaleX(0.9490);">8.Lxc6</div><div class="T" style="left:1160.10px;top:241.38px;font-size:15.5px;color:#111;transform:scaleX(0.9490);">bxc6</div><div class="T" style="left:1199.50px;top:241.38px;font-size:15.5px;color:#111;transform:scaleX(0.9490);">9.0-0</div><div class="T" style="left:1241.80px;top:241.38px;font-size:15.5px;color:#111;transform:scaleX(0.9490);">Le7</div><div class="T" style="left:1274.50px;top:241.38px;font-size:15.5px;color:#111;transform:scaleX(0.9490);">10.f3</div><div class="T" style="left:1314.20px;top:241.38px;font-size:15.5px;color:#111;transform:scaleX(0.9490);">Sg5</div><div class="T" style="left:1348.00px;top:241.38px;font-size:15.5px;color:#111;transform:scaleX(0.9490);">11.f4</div><div style="left:1383.2px;top:237.4px;width:32.2px;height:22.5px;background:#000"></div><div class="T" style="left:1388.00px;top:241.38px;font-size:15.5px;color:#fff;transform:scaleX(0.9490);">Se4</div><div class="T" style="left:1421.80px;top:241.38px;font-size:15.5px;color:#111;transform:scaleX(0.9490);">12.Sd2</div><div class="T" style="left:1474.30px;top:241.38px;font-size:15.5px;color:#111;transform:scaleX(0.9490);">c5</div><div class="T" style="left:1498.70px;top:241.38px;font-size:15.5px;color:#111;transform:scaleX(0.9490);">13.S4f3</div><div class="T" style="left:604.40px;top:264.38px;font-size:15.5px;color:#111;transform:scaleX(0.9490);">0-0</div><div class="T" style="left:636.00px;top:264.38px;font-size:15.5px;color:#111;transform:scaleX(0.9490);">14.De2</div><div class="T" style="left:690.40px;top:264.38px;font-size:15.5px;color:#111;transform:scaleX(0.9490);">Tb8</div><div class="T" style="left:724.00px;top:264.38px;font-size:15.5px;color:#111;transform:scaleX(0.9490);">15.a4</div><div class="T" style="left:767.00px;top:264.38px;font-size:15.5px;color:#111;transform:scaleX(0.9490);">Lc6</div><div class="T" style="left:798.00px;top:264.38px;font-size:15.5px;color:#111;transform:scaleX(0.9490);">16.Td1</div><div class="T" style="left:849.00px;top:264.38px;font-size:15.5px;color:#111;transform:scaleX(0.9490);">De8</div><div class="T" style="left:884.00px;top:264.38px;font-size:15.5px;color:#111;transform:scaleX(0.9490);">17.Sxe4</div><div class="T" style="left:943.00px;top:264.38px;font-size:15.5px;color:#111;transform:scaleX(0.9490);">dxe4</div><div class="T" style="left:984.00px;top:264.38px;font-size:15.5px;color:#111;transform:scaleX(0.9490);">18.Sd2</div><div class="T" style="left:1036.00px;top:264.38px;font-size:15.5px;color:#111;transform:scaleX(0.9490);">f5</div><div class="T" style="left:1058.00px;top:264.38px;font-size:15.5px;color:#111;transform:scaleX(0.9490);">19.Sb3</div><div class="T" style="left:1111.00px;top:264.38px;font-size:15.5px;color:#111;transform:scaleX(0.9490);">Tb4</div><div class="T" style="left:1144.00px;top:264.38px;font-size:15.5px;color:#111;transform:scaleX(0.9490);">20.Le3</div><div class="T" style="left:1195.60px;top:264.38px;font-size:15.5px;color:#111;transform:scaleX(0.9490);">Lxa4</div><div class="T" style="left:1233.80px;top:264.38px;font-size:15.5px;color:#111;transform:scaleX(0.9490);">21.Sxc5</div><div class="T" style="left:1292.20px;top:264.38px;font-size:15.5px;color:#111;transform:scaleX(0.9490);">Lb5</div><div class="T" style="left:1324.50px;top:264.38px;font-size:15.5px;color:#111;transform:scaleX(0.9490);">22.Dd2</div><div class="T" style="left:1380.40px;top:264.38px;font-size:15.5px;color:#111;transform:scaleX(0.9490);">Tc4</div><div class="T" style="left:1410.60px;top:264.38px;font-size:15.5px;color:#111;transform:scaleX(0.9490);">23.Se6</div><div class="T" style="left:1462.70px;top:264.38px;font-size:15.5px;color:#111;transform:scaleX(0.9490);">Tf7</div><div class="T" style="left:1490.30px;top:264.38px;font-size:15.5px;color:#111;transform:scaleX(0.9490);">24.Txa7</div><div class="T" style="left:604.40px;top:287.38px;font-size:15.5px;color:#111;transform:scaleX(0.9490);">Lf8</div><div class="T" style="left:633.00px;top:287.38px;font-size:15.5px;color:#111;transform:scaleX(0.9490);">25.Sxf8</div><div class="T" style="left:688.60px;top:287.38px;font-size:15.5px;color:#111;transform:scaleX(0.9490);">Dxf8</div><div class="T" style="left:727.00px;top:287.38px;font-size:15.5px;color:#111;transform:scaleX(0.9490);">26.Dd5</div><div class="T" style="left:783.00px;top:287.38px;font-size:15.5px;color:#111;transform:scaleX(0.9490);">c6</div><div class="T" style="left:807.00px;top:287.38px;font-size:15.5px;color:#111;transform:scaleX(0.9490);">27.Txf7</div><div class="T" style="left:861.00px;top:287.38px;font-size:15.5px;color:#111;transform:scaleX(0.9490);">cxd5</div><div class="T" style="left:901.00px;top:287.38px;font-size:15.5px;color:#111;transform:scaleX(0.9490);">28.Txf8+</div><div class="T" style="left:966.00px;top:287.38px;font-size:15.5px;color:#111;transform:scaleX(0.9490);">Kxf8</div><div class="T" style="left:1003.60px;top:287.38px;font-size:15.5px;color:#111;transform:scaleX(0.9490);">29.Txd5</div><div class="T" style="left:604.40px;top:310.38px;font-size:15.5px;color:#111;transform:scaleX(0.9490);">1-0</div><div style="left:1577px;top:229px;width:14px;height:312px;background:#fafafb"></div><svg style="left:1579px;top:234px;" width="9" height="6" viewBox="0 0 9 6"><path d="M0 6L4.5 0 9 6z" fill="#9a9a9a"/></svg><div style="left:1578px;top:246px;width:11px;height:16px;background:#cdd1e3"></div><svg style="left:1579px;top:521px;" width="9" height="6" viewBox="0 0 9 6"><path d="M0 0h9L4.5 6z" fill="#9a9a9a"/></svg><div style="left:1591px;top:229px;width:2px;height:335px;background:#2a2a2a"></div><svg style="left:1593px;top:229px;" width="7" height="200" viewBox="0 0 7 200"><path d="M1 11l5-4v8z" fill="#333"/><path d="M6 8h2" stroke="#333" stroke-width="1.5"/><path d="M1.5 33a4 4 0 0 1 6-3" fill="none" stroke="#333" stroke-width="1.6"/><path d="M1 49l5-4v8z" fill="#333"/><path d="M6 49h2" stroke="#333" stroke-width="1.5"/><circle cx="5" cy="70" r="3" fill="none" stroke="#888" stroke-width="1.3"/><path d="M1 92l3-9h2l3 9M2.5 88h5" fill="none" stroke="#222" stroke-width="1.6"/><rect x="1.5" y="99" width="6" height="9" fill="none" stroke="#555" stroke-width="1"/><path d="M3 99a2 2 0 0 1 4 0" fill="none" stroke="#555"/><path d="M1 127l4-4h3v7H4z" fill="#777"/><rect x="1" y="137" width="7" height="11" fill="#7a5a40"/><rect x="2" y="139" width="3" height="4" fill="#d8b890"/><ellipse cx="6" cy="165" rx="5" ry="3" fill="#5a7ac0"/><rect x="1" y="174" width="7" height="15" fill="#e01818"/></svg><div style="left:600px;top:540px;width:991px;height:2px;background:#2a2a2a"></div><svg style="left:609px;top:544px;opacity:0.75" width="17" height="17"><use href="#wN"/></svg><svg style="left:1101px;top:543px" width="17" height="17"><use href="#bB"/></svg><div style="left:600px;top:562px;width:1000px;height:2px;background:#2a2a2a"></div><svg style="left:599px;top:564px" width="1001" height="58" viewBox="599 564 1001 58"><line x1="607" y1="571.5" x2="1600" y2="571.5" stroke="#f2f2f2" stroke-width="1"/><line x1="607" y1="578.5" x2="1600" y2="578.5" stroke="#f2f2f2" stroke-width="1"/><line x1="607" y1="585.5" x2="1600" y2="585.5" stroke="#f2f2f2" stroke-width="1"/><line x1="607" y1="600.5" x2="1600" y2="600.5" stroke="#f2f2f2" stroke-width="1"/><line x1="607" y1="607.5" x2="1600" y2="607.5" stroke="#f2f2f2" stroke-width="1"/><line x1="607" y1="614.5" x2="1600" y2="614.5" stroke="#f2f2f2" stroke-width="1"/><line x1="607" y1="593.5" x2="1600" y2="593.5" stroke="#6a6a6a" stroke-width="1"/><line x1="607.5" y1="570" x2="607.5" y2="617" stroke="#333" stroke-width="1"/><text x="604" y="575" font-size="6" fill="#777" text-anchor="middle" font-family="Liberation Sans">4</text><text x="604" y="582" font-size="6" fill="#777" text-anchor="middle" font-family="Liberation Sans">2</text><text x="604" y="588" font-size="6" fill="#777" text-anchor="middle" font-family="Liberation Sans">1</text><text x="604" y="603" font-size="6" fill="#777" text-anchor="middle" font-family="Liberation Sans">-1</text><text x="604" y="610" font-size="6" fill="#777" text-anchor="middle" font-family="Liberation Sans">-2</text><text x="604" y="617" font-size="6" fill="#777" text-anchor="middle" font-family="Liberation Sans">-4</text><line x1="650" y1="590" x2="650" y2="596" stroke="#444" stroke-width="1"/><text x="650" y="620" font-size="6" fill="#999" text-anchor="middle" font-family="Liberation Sans">2</text><line x1="706" y1="590" x2="706" y2="596" stroke="#444" stroke-width="1"/><text x="706" y="620" font-size="6" fill="#999" text-anchor="middle" font-family="Liberation Sans">4</text><line x1="762" y1="590" x2="762" y2="596" stroke="#444" stroke-width="1"/><text x="762" y="620" font-size="6" fill="#999" text-anchor="middle" font-family="Liberation Sans">6</text><line x1="818" y1="590" x2="818" y2="596" stroke="#444" stroke-width="1"/><text x="818" y="620" font-size="6" fill="#999" text-anchor="middle" font-family="Liberation Sans">8</text><line x1="874" y1="590" x2="874" y2="596" stroke="#444" stroke-width="1"/><text x="874" y="620" font-size="6" fill="#999" text-anchor="middle" font-family="Liberation Sans">10</text><line x1="930" y1="590" x2="930" y2="596" stroke="#444" stroke-width="1"/><text x="930" y="620" font-size="6" fill="#999" text-anchor="middle" font-family="Liberation Sans">12</text><line x1="986" y1="590" x2="986" y2="596" stroke="#444" stroke-width="1"/><text x="986" y="620" font-size="6" fill="#999" text-anchor="middle" font-family="Liberation Sans">14</text><line x1="1042" y1="590" x2="1042" y2="596" stroke="#444" stroke-width="1"/><text x="1042" y="620" font-size="6" fill="#999" text-anchor="middle" font-family="Liberation Sans">16</text><line x1="1098" y1="590" x2="1098" y2="596" stroke="#444" stroke-width="1"/><text x="1098" y="620" font-size="6" fill="#999" text-anchor="middle" font-family="Liberation Sans">18</text><line x1="1154" y1="590" x2="1154" y2="596" stroke="#444" stroke-width="1"/><text x="1154" y="620" font-size="6" fill="#999" text-anchor="middle" font-family="Liberation Sans">20</text><line x1="1210" y1="590" x2="1210" y2="596" stroke="#444" stroke-width="1"/><text x="1210" y="620" font-size="6" fill="#999" text-anchor="middle" font-family="Liberation Sans">22</text><line x1="1266" y1="590" x2="1266" y2="596" stroke="#444" stroke-width="1"/><text x="1266" y="620" font-size="6" fill="#999" text-anchor="middle" font-family="Liberation Sans">24</text><line x1="1322" y1="590" x2="1322" y2="596" stroke="#444" stroke-width="1"/><text x="1322" y="620" font-size="6" fill="#999" text-anchor="middle" font-family="Liberation Sans">26</text><line x1="1378" y1="590" x2="1378" y2="596" stroke="#444" stroke-width="1"/><text x="1378" y="620" font-size="6" fill="#999" text-anchor="middle" font-family="Liberation Sans">28</text><line x1="1434" y1="590" x2="1434" y2="596" stroke="#444" stroke-width="1"/><text x="1434" y="620" font-size="6" fill="#999" text-anchor="middle" font-family="Liberation Sans">30</text><line x1="1490" y1="590" x2="1490" y2="596" stroke="#444" stroke-width="1"/><text x="1490" y="620" font-size="6" fill="#999" text-anchor="middle" font-family="Liberation Sans">32</text><defs><linearGradient id="gg" x1="0" y1="0" x2="0" y2="1"><stop offset="0" stop-color="#2a9a2a"/><stop offset="1" stop-color="#0a6a0a"/></linearGradient><linearGradient id="yg" x1="0" y1="0" x2="0" y2="1"><stop offset="0" stop-color="#f8f020"/><stop offset="1" stop-color="#dccf10"/></linearGradient></defs><rect x="620" y="592.5" width="14" height="1" fill="url(#gg)"/><rect x="634" y="591.5" width="29" height="2" fill="url(#gg)"/><rect x="663" y="592.5" width="14" height="1" fill="url(#gg)"/><rect x="703.5" y="593.5" width="28.5" height="2" fill="#e02020"/><rect x="732" y="593.5" width="14" height="1" fill="#e02020"/><rect x="774" y="593.5" width="29" height="1" fill="#e02020"/><rect x="816.6" y="592.0" width="14" height="1.5" fill="url(#gg)"/><rect x="859" y="592.0" width="13" height="1.5" fill="url(#gg)"/><rect x="887" y="592.5" width="14" height="1" fill="url(#gg)"/><rect x="928" y="591.5" width="14" height="2" fill="url(#gg)"/><rect x="942" y="592.0" width="15" height="1.5" fill="url(#gg)"/><rect x="957" y="593.5" width="43.6" height="3.5" fill="#e02020"/><rect x="1000.6" y="593.5" width="14" height="3" fill="#e02020"/><rect x="1014.6" y="593.5" width="14" height="5.5" fill="#e02020"/><rect x="1028.6" y="593.5" width="14" height="3" fill="#e02020"/><rect x="1042.6" y="593.5" width="14" height="4.5" fill="#e02020"/><rect x="1070.6" y="590.5" width="14" height="3" fill="url(#gg)"/><rect x="1112.6" y="592.5" width="14" height="1" fill="url(#gg)"/><rect x="1126.6" y="593.0" width="14" height="0.5" fill="url(#gg)"/><rect x="1140.6" y="592.5" width="14" height="1" fill="url(#gg)"/><rect x="1154.6" y="590.5" width="14" height="3" fill="url(#gg)"/><rect x="1168.6" y="587.5" width="14" height="6" fill="url(#gg)"/><rect x="1196.6" y="582.5" width="14" height="11" fill="url(#gg)"/><rect x="1210.6" y="589.5" width="14" height="4" fill="url(#gg)"/><rect x="1224.6" y="580.5" width="14" height="13" fill="url(#gg)"/><rect x="1238.6" y="579.0" width="14" height="14.5" fill="url(#gg)"/><rect x="1252.6" y="577.5" width="28" height="16" fill="url(#gg)"/><rect x="1280.6" y="576.5" width="14" height="17" fill="url(#gg)"/><rect x="1294.6" y="579.0" width="14" height="14.5" fill="url(#gg)"/><rect x="1350.6" y="579.0" width="14" height="14.5" fill="url(#gg)"/><rect x="1364.6" y="585.8" width="14" height="7.7" fill="url(#gg)"/><rect x="1378.6" y="581.5" width="14" height="12" fill="url(#gg)"/><rect x="1392.6" y="579.5" width="28" height="14" fill="url(#gg)"/><rect x="1308.6" y="571.5" width="42" height="22" fill="url(#yg)"/><line x1="985.5" y1="568" x2="985.5" y2="620" stroke="#555" stroke-width="1" stroke-dasharray="2,2"/><line x1="1378.5" y1="568" x2="1378.5" y2="620" stroke="#555" stroke-width="1" stroke-dasharray="2,2"/><path d="M911 565h8l-4 6z" fill="#1010e0"/></svg><div style="left:607px;top:622px;width:993px;height:1px;background:#d8d8d8"></div><svg style="left:607.5px;top:624.0px;" width="16" height="16" viewBox="0 0 16 16"><path d="M8 1L3 7h3v8h4V7h3z" fill="#1a7a1a"/></svg><svg style="left:629.5px;top:624.0px;" width="16" height="16" viewBox="0 0 16 16"><path d="M3 3l10 10M13 3L3 13" stroke="#e03030" stroke-width="1.6"/><path d="M7 9l4 4" stroke="#888" stroke-width="2"/></svg><svg style="left:652.0px;top:624.0px;" width="16" height="16" viewBox="0 0 16 16"><path d="M6 2h4v12H6" fill="none" stroke="#111" stroke-width="2"/></svg><svg style="left:674.0px;top:624.0px;" width="16" height="16" viewBox="0 0 16 16"><svg x="1" y="0" width="15" height="16" viewBox="0 0 45 45"><use href="#bP"/></svg><path d="M2 3h3M3.5 3v4" stroke="#c22" stroke-width="1"/></svg><svg style="left:696.0px;top:624.0px;" width="16" height="16" viewBox="0 0 16 16"><path d="M8 2a2 2 0 0 1 1.5 3.4L11 10l2 4H3l2-4 1.5-4.6A2 2 0 0 1 8 2z" fill="#dd2222"/><path d="M12 12h3M13.5 12v3" stroke="#333" stroke-width="1"/></svg><svg style="left:718.0px;top:624.0px;" width="16" height="16" viewBox="0 0 16 16"><rect width="16" height="16" fill="#7a4a2a"/><rect x="1" y="1" width="7" height="7" fill="#d8ccb8"/><rect x="8" y="1" width="7" height="7" fill="#3a2a20"/><rect x="1" y="8" width="7" height="7" fill="#4a3020"/><rect x="8" y="8" width="7" height="7" fill="#e8c8c0"/><g fill="#111"><rect x="3" y="2.5" width="3" height="4.5"/><path d="M10 7l1.5-4.5L13 7z"/><path d="M3 14l1.5-4.5L6 14z"/><path d="M10 14l1.5-4.5L13 14z"/></g></svg><div class="T" style="left:728.5px;top:623px;width:40px;text-align:center;font-size:16px;line-height:18px;color:#222">!!</div><div class="T" style="left:750.5px;top:623px;width:40px;text-align:center;font-size:16px;line-height:18px;color:#222">!</div><div class="T" style="left:773px;top:623px;width:40px;text-align:center;font-size:16px;line-height:18px;color:#222">!?</div><div class="T" style="left:795px;top:623px;width:40px;text-align:center;font-size:16px;line-height:18px;color:#222">?!</div><div class="T" style="left:817.5px;top:623px;width:40px;text-align:center;font-size:16px;line-height:18px;color:#222">?</div><div class="T" style="left:839.5px;top:623px;width:40px;text-align:center;font-size:16px;line-height:18px;color:#222">??</div><div class="T" style="left:861.5px;top:623px;width:40px;text-align:center;font-size:16px;line-height:18px;color:#222">+−</div><div class="T" style="left:883.5px;top:623px;width:40px;text-align:center;font-size:16px;line-height:18px;color:#222">±</div><div class="T" style="left:905.5px;top:623px;width:40px;text-align:center;font-size:16px;line-height:18px;color:#222">⩲</div><div class="T" style="left:927.5px;top:623px;width:40px;text-align:center;font-size:16px;line-height:18px;color:#222">=</div><div class="T" style="left:949.5px;top:623px;width:40px;text-align:center;font-size:16px;line-height:18px;color:#222">∞</div><div class="T" style="left:993.5px;top:623px;width:40px;text-align:center;font-size:16px;line-height:18px;color:#222">⩱</div><div class="T" style="left:1015.5px;top:623px;width:40px;text-align:center;font-size:16px;line-height:18px;color:#222">∓</div><div class="T" style="left:1037px;top:623px;width:40px;text-align:center;font-size:16px;line-height:18px;color:#222">−+</div><svg style="left:983.5px;top:624.0px;" width="16" height="16" viewBox="0 0 16 16"><g fill="none" stroke="#222" stroke-width="1.3"><ellipse cx="5.5" cy="4.5" rx="2.6" ry="2.2"/><ellipse cx="10.5" cy="4.5" rx="2.6" ry="2.2"/><path d="M2.5 10h11M2.5 13h11"/></g></svg><svg style="left:1071.0px;top:624.0px;" width="16" height="16" viewBox="0 0 16 16"><path d="M2 5h11M10 2l3 3-3 3M14 11H3M6 8l-3 3 3 3" fill="none" stroke="#222" stroke-width="1.4"/></svg><svg style="left:1093.0px;top:624.0px;" width="16" height="16" viewBox="0 0 16 16"><g transform="rotate(-30 8 8)"><rect x="1" y="5" width="14" height="7" rx="2" fill="#4a70c8"/><rect x="8" y="5" width="7" height="7" rx="1" fill="#e04848"/></g></svg><svg style="left:1115.0px;top:624.0px;" width="16" height="16" viewBox="0 0 16 16"><path d="M8 1l2.2 4.6 5 .6-3.7 3.4 1 5L8 12.2 3.5 14.6l1-5L.8 6.2l5-.6z" fill="#e8e8e8" stroke="#bbb" stroke-width="0.8"/></svg><svg style="left:1137.0px;top:624.0px;" width="16" height="16" viewBox="0 0 16 16"><path d="M8 1l2.2 4.6 5 .6-3.7 3.4 1 5L8 12.2 3.5 14.6l1-5L.8 6.2l5-.6z" fill="#e8e8e8" stroke="#bbb" stroke-width="0.8"/><path d="M9 12h6M12 9v6" stroke="#555" stroke-width="1.2"/></svg><svg style="left:1159.0px;top:624.0px;" width="16" height="16" viewBox="0 0 16 16"><path d="M2 2l12 10M2 14c3-4 6-8 12-11" fill="none" stroke="#444" stroke-width="2"/></svg><div style="left:1188px;top:632px;width:4px;height:4px;background:#111;border-radius:50%"></div><svg style="left:1203.0px;top:624.0px;" width="16" height="16" viewBox="0 0 16 16"><rect x="5" y="1" width="6" height="10" rx="3" fill="#999"/><path d="M4 13h8M8 11v3" stroke="#777" stroke-width="1.3"/></svg><div style="left:0px;top:645px;width:1600px;height:6px;background:#ededf0"></div><div style="left:0px;top:649.5px;width:1600px;height:1.2px;background:#9aa6b8"></div><div style="left:0px;top:650.5px;width:1600px;height:19.5px;background:linear-gradient(#abbfd8,#8b9fbc)"></div><div class="T" style="left:3.00px;top:654.93px;font-size:11.3px;color:#1a1a1a;transform:scaleX(0.8821);">Reference</div><svg style="left:1587px;top:657px;" width="10" height="6" viewBox="0 0 10 6"><path d="M0 0h10L5 6z" fill="#111"/></svg><div style="left:0px;top:670px;width:652px;height:147px;background:#efeff1"></div><div style="left:0px;top:671px;width:630px;height:131px;background:#fff"></div><div style="left:0px;top:671px;width:630px;height:20px;background:#f4f4f4"></div><div style="left:0px;top:690px;width:630px;height:1px;background:#e6e6e6"></div><div style="left:99.5px;top:672px;width:1px;height:19px;background:#d8d8d8"></div><div style="left:179px;top:672px;width:1px;height:19px;background:#d8d8d8"></div><div style="left:258px;top:672px;width:1px;height:19px;background:#d8d8d8"></div><div style="left:337px;top:672px;width:1px;height:19px;background:#d8d8d8"></div><div style="left:431px;top:672px;width:1px;height:19px;background:#d8d8d8"></div><div style="left:516.5px;top:672px;width:1px;height:19px;background:#d8d8d8"></div><div class="T" style="left:3.90px;top:676.93px;font-size:11.3px;color:#333;transform:scaleX(0.9255);">Moves</div><div class="T" style="left:103.60px;top:676.93px;font-size:11.3px;color:#333;transform:scaleX(0.8918);">Games</div><div class="T" style="left:183.10px;top:676.93px;font-size:11.3px;color:#333;transform:scaleX(0.8816);">Score</div><div class="T" style="left:262.20px;top:676.93px;font-size:11.3px;color:#333;transform:scaleX(0.8928);">Draws</div><div class="T" style="left:341.20px;top:676.93px;font-size:11.3px;color:#333;transform:scaleX(0.8907);">Played</div><div class="T" style="left:435.20px;top:676.93px;font-size:11.3px;color:#333;transform:scaleX(0.9675);">Hot</div><div class="T" style="left:520.40px;top:676.93px;font-size:11.3px;color:#333;transform:scaleX(0.9051);">Best players</div><div style="left:179.5px;top:691.5px;width:57.433px;height:16px;background:#e7f3e7"></div><div style="left:236.933px;top:691.5px;width:21.567px;height:16px;background:#f5e7e7"></div><div style="left:0;top:691.5px;width:630px;height:17px;overflow:hidden"><div class="T" style="left:7.15px;top:3.34px;font-size:12px;color:#1a1a1a;transform:scaleX(0.8254);font-weight:bold">12.Sc3</div><div class="T" style="left:104.70px;top:3.34px;font-size:12px;color:#1a1a1a;transform:scaleX(0.9344);">141</div><div class="T" style="left:183.70px;top:3.34px;font-size:12px;color:#1a1a1a;transform:scaleX(0.9344);">72.7%</div><div class="T" style="left:262.60px;top:3.34px;font-size:12px;color:#1a1a1a;transform:scaleX(0.9344);">20.5%</div><div class="T" style="left:342.30px;top:3.34px;font-size:12px;color:#1a1a1a;transform:scaleX(0.9344);">1963-2024</div><div class="T" style="left:520.40px;top:3.34px;font-size:12px;color:#1a1a1a;transform:scaleX(0.9344);">Huschenbeth;Zelcic;Tu</div></div><div style="left:179.5px;top:708.5px;width:47.242px;height:16px;background:#e7f3e7"></div><div style="left:226.742px;top:708.5px;width:31.758000000000003px;height:16px;background:#f5e7e7"></div><div style="left:0;top:708.5px;width:630px;height:17px;overflow:hidden"><div class="T" style="left:7.15px;top:3.34px;font-size:12px;color:#1a1a1a;transform:scaleX(0.8254);font-weight:bold">12.f5</div><div class="T" style="left:104.70px;top:3.34px;font-size:12px;color:#1a1a1a;transform:scaleX(0.9344);">117</div><div class="T" style="left:183.70px;top:3.34px;font-size:12px;color:#1a1a1a;transform:scaleX(0.9344);">59.8%</div><div class="T" style="left:262.60px;top:3.34px;font-size:12px;color:#1a1a1a;transform:scaleX(0.9344);">17.0%</div><div class="T" style="left:342.30px;top:3.34px;font-size:12px;color:#1a1a1a;transform:scaleX(0.9344);">1938-2024</div><div class="T" style="left:520.40px;top:3.34px;font-size:12px;color:#1a1a1a;transform:scaleX(0.9344);">Jones;Huschenbeth;Sh</div></div><div style="left:179.5px;top:725.5px;width:47.637px;height:16px;background:#e7f3e7"></div><div style="left:227.137px;top:725.5px;width:31.363px;height:16px;background:#f5e7e7"></div><div style="left:0;top:725.5px;width:630px;height:17px;overflow:hidden"><div class="T" style="left:7.15px;top:3.34px;font-size:12px;color:#1a1a1a;transform:scaleX(0.8254);font-weight:bold">12.Sd2</div><div class="T" style="left:104.70px;top:3.34px;font-size:12px;color:#1a1a1a;transform:scaleX(0.9344);">78</div><div class="T" style="left:183.70px;top:3.34px;font-size:12px;color:#1a1a1a;transform:scaleX(0.9344);">60.3%</div><div class="T" style="left:262.60px;top:3.34px;font-size:12px;color:#1a1a1a;transform:scaleX(0.9344);">20.5%</div><div class="T" style="left:342.30px;top:3.34px;font-size:12px;color:#1a1a1a;transform:scaleX(0.9344);">1844-2024</div><div class="T" style="left:520.40px;top:3.34px;font-size:12px;color:#1a1a1a;transform:scaleX(0.9344);">Kosteniuk</div></div><div style="left:179.5px;top:742.5px;width:39.5px;height:16px;background:#e7f3e7"></div><div style="left:219.0px;top:742.5px;width:39.5px;height:16px;background:#f5e7e7"></div><div style="left:0;top:742.5px;width:630px;height:17px;overflow:hidden"><div class="T" style="left:7.15px;top:3.34px;font-size:12px;color:#1a1a1a;transform:scaleX(0.8254);font-weight:bold">12.Le3</div><div class="T" style="left:104.70px;top:3.34px;font-size:12px;color:#1a1a1a;transform:scaleX(0.9344);">46</div><div class="T" style="left:183.70px;top:3.34px;font-size:12px;color:#1a1a1a;transform:scaleX(0.9344);">50.0%</div><div class="T" style="left:262.60px;top:3.34px;font-size:12px;color:#1a1a1a;transform:scaleX(0.9344);">26.0%</div><div class="T" style="left:342.30px;top:3.34px;font-size:12px;color:#1a1a1a;transform:scaleX(0.9344);">1991-2024</div></div><div style="left:179.5px;top:759.5px;width:39.5px;height:16px;background:#e7f3e7"></div><div style="left:219.0px;top:759.5px;width:39.5px;height:16px;background:#f5e7e7"></div><div style="left:0;top:759.5px;width:630px;height:17px;overflow:hidden"><div class="T" style="left:7.15px;top:3.34px;font-size:12px;color:#1a1a1a;transform:scaleX(0.8254);font-weight:bold">12.c3</div><div class="T" style="left:104.70px;top:3.34px;font-size:12px;color:#1a1a1a;transform:scaleX(0.9344);">23</div><div class="T" style="left:183.70px;top:3.34px;font-size:12px;color:#1a1a1a;transform:scaleX(0.9344);">50.0%</div><div class="T" style="left:262.60px;top:3.34px;font-size:12px;color:#1a1a1a;transform:scaleX(0.9344);">21.7%</div><div class="T" style="left:342.30px;top:3.34px;font-size:12px;color:#1a1a1a;transform:scaleX(0.9344);">1975-2024</div></div><div style="left:179.5px;top:776.5px;width:50.797000000000004px;height:16px;background:#e7f3e7"></div><div style="left:230.297px;top:776.5px;width:28.202999999999996px;height:16px;background:#f5e7e7"></div><div style="left:0;top:776.5px;width:630px;height:17px;overflow:hidden"><div class="T" style="left:7.15px;top:3.34px;font-size:12px;color:#1a1a1a;transform:scaleX(0.8254);font-weight:bold">12.Sb3</div><div class="T" style="left:104.70px;top:3.34px;font-size:12px;color:#1a1a1a;transform:scaleX(0.9344);">7</div><div class="T" style="left:183.70px;top:3.34px;font-size:12px;color:#1a1a1a;transform:scaleX(0.9344);">64.3%</div><div class="T" style="left:262.60px;top:3.34px;font-size:12px;color:#1a1a1a;transform:scaleX(0.9344);">14.2%</div><div class="T" style="left:342.30px;top:3.34px;font-size:12px;color:#1a1a1a;transform:scaleX(0.9344);">1997-2024</div><div class="T" style="left:520.40px;top:3.34px;font-size:12px;color:#1a1a1a;transform:scaleX(0.9344);">Guseinov</div></div><div style="left:179.5px;top:793.5px;width:33.891px;height:8.0px;background:#e7f3e7"></div><div style="left:213.391px;top:793.5px;width:45.109px;height:8.0px;background:#f5e7e7"></div><div style="left:0;top:793.5px;width:630px;height:8.0px;overflow:hidden"><div class="T" style="left:7.15px;top:3.34px;font-size:12px;color:#1a1a1a;transform:scaleX(0.8254);font-weight:bold">12.0-0</div><div class="T" style="left:104.70px;top:3.34px;font-size:12px;color:#1a1a1a;transform:scaleX(0.9344);">7</div><div class="T" style="left:183.70px;top:3.34px;font-size:12px;color:#1a1a1a;transform:scaleX(0.9344);">42.9%</div><div class="T" style="left:262.60px;top:3.34px;font-size:12px;color:#1a1a1a;transform:scaleX(0.9344);">28.5%</div><div class="T" style="left:342.30px;top:3.34px;font-size:12px;color:#1a1a1a;transform:scaleX(0.9344);">1990-2022</div></div><div style="left:0px;top:725px;width:630px;height:1px;background:#3d8fe0"></div><div style="left:0px;top:741px;width:630px;height:1px;background:#3d8fe0"></div><div style="left:630px;top:671px;width:21px;height:131px;background:#f4f4f6"></div><div style="left:636px;top:688px;width:4px;height:64px;background:#8a8a8a;border-radius:2px"></div><div style="left:17px;top:809px;width:325px;height:4px;background:#8a8a8a;border-radius:2px"></div><div style="left:651px;top:670px;width:1px;height:147px;background:#555"></div><div style="left:652px;top:671px;width:603px;height:131px;background:#fff"></div><div style="left:652px;top:671px;width:588px;height:19px;background:#f4f4f4"></div><div style="left:652px;top:690px;width:588px;height:1px;background:#e6e6e6"></div><div style="left:780px;top:672px;width:1px;height:18px;background:#d8d8d8"></div><div style="left:827.5px;top:672px;width:1px;height:18px;background:#d8d8d8"></div><div style="left:952.5px;top:672px;width:1px;height:18px;background:#d8d8d8"></div><div style="left:1000px;top:672px;width:1px;height:18px;background:#d8d8d8"></div><div style="left:1052.5px;top:672px;width:1px;height:18px;background:#d8d8d8"></div><div style="left:1093.5px;top:672px;width:1px;height:18px;background:#d8d8d8"></div><div style="left:1145.5px;top:672px;width:1px;height:18px;background:#d8d8d8"></div><div class="T" style="left:656.00px;top:675.93px;font-size:11.3px;color:#333;transform:scaleX(0.9698);">White</div><div class="T" style="left:784.40px;top:675.93px;font-size:11.3px;color:#333;transform:scaleX(0.9015);">Elo W</div><div class="T" style="left:831.60px;top:675.93px;font-size:11.3px;color:#333;transform:scaleX(0.8813);">Black</div><div class="T" style="left:957.50px;top:675.93px;font-size:11.3px;color:#333;transform:scaleX(0.8553);">Elo B</div><div class="T" style="left:1004.60px;top:675.93px;font-size:11.3px;color:#333;transform:scaleX(0.8803);">Result</div><div class="T" style="left:1056.10px;top:675.93px;font-size:11.3px;color:#333;transform:scaleX(0.8379);">ECO</div><div class="T" style="left:1097.80px;top:675.93px;font-size:11.3px;color:#333;transform:scaleX(0.8268);">VCS</div><div class="T" style="left:1149.80px;top:675.93px;font-size:11.3px;color:#333;transform:scaleX(0.9942);">Annotator</div><div style="left:652px;top:690.5px;width:588px;height:51px;background:#0a74d8"></div><div style="left:652px;top:691.5px;width:588px;height:17px;overflow:hidden"><div class="T" style="left:7.00px;top:3.34px;font-size:12px;color:#fff;transform:scaleX(0.8926);font-weight:bold">Pirrot,Dieter</div><div class="T" style="left:128.60px;top:3.34px;font-size:12px;color:#1a1a1a;transform:scaleX(0.9139);">2403</div><div class="T" style="left:180.00px;top:3.34px;font-size:12px;color:#fff;transform:scaleX(0.8926);font-weight:bold">Graf,Alexander</div><div class="T" style="left:301.40px;top:3.34px;font-size:12px;color:#1a1a1a;transform:scaleX(0.9139);">2606</div><div class="T" style="left:353.00px;top:3.34px;font-size:12px;color:#fff;transform:scaleX(0.8926);font-weight:bold">1-0</div><div class="T" style="left:404.50px;top:3.34px;font-size:12px;color:#fff;transform:scaleX(0.8926);font-weight:bold">C56</div><div class="T" style="left:446.40px;top:3.34px;font-size:12px;color:#fff;transform:scaleX(0.8926);font-weight:bold">vCS</div><div class="T" style="left:498.00px;top:3.34px;font-size:12px;color:#fff;transform:scaleX(0.9139);">Gutman,Lev</div></div><div style="left:652px;top:708.5px;width:588px;height:17px;overflow:hidden"><div class="T" style="left:7.00px;top:3.34px;font-size:12px;color:#fff;transform:scaleX(0.8926);font-weight:bold">Jones,Gawain C B</div><div class="T" style="left:128.60px;top:3.34px;font-size:12px;color:#1a1a1a;transform:scaleX(0.9139);">2635</div><div class="T" style="left:180.00px;top:3.34px;font-size:12px;color:#fff;transform:scaleX(0.8926);font-weight:bold">Naiditsch,Arkadij</div><div class="T" style="left:301.40px;top:3.34px;font-size:12px;color:#1a1a1a;transform:scaleX(0.9139);">2693</div><div class="T" style="left:353.00px;top:3.34px;font-size:12px;color:#fff;transform:scaleX(0.8926);font-weight:bold">1-0</div><div class="T" style="left:404.50px;top:3.34px;font-size:12px;color:#fff;transform:scaleX(0.8926);font-weight:bold">C56</div><div class="T" style="left:446.40px;top:3.34px;font-size:12px;color:#fff;transform:scaleX(0.8926);font-weight:bold">rCS</div><div class="T" style="left:498.00px;top:3.34px;font-size:12px;color:#fff;transform:scaleX(0.9139);">Jones,Gawain C B</div></div><div style="left:652px;top:725.5px;width:588px;height:17px;overflow:hidden"><div class="T" style="left:7.00px;top:3.34px;font-size:12px;color:#fff;transform:scaleX(0.8926);font-weight:bold">Vocaturo,Daniele</div><div class="T" style="left:128.60px;top:3.34px;font-size:12px;color:#1a1a1a;transform:scaleX(0.9139);">2383</div><div class="T" style="left:180.00px;top:3.34px;font-size:12px;color:#fff;transform:scaleX(0.8926);font-weight:bold">Lafuente,Pablo</div><div class="T" style="left:301.40px;top:3.34px;font-size:12px;color:#1a1a1a;transform:scaleX(0.9139);">2522</div><div class="T" style="left:353.00px;top:3.34px;font-size:12px;color:#fff;transform:scaleX(0.8926);font-weight:bold">1-0</div><div class="T" style="left:404.50px;top:3.34px;font-size:12px;color:#fff;transform:scaleX(0.8926);font-weight:bold">C56</div><div class="T" style="left:446.40px;top:3.34px;font-size:12px;color:#fff;transform:scaleX(0.8926);font-weight:bold">vCS</div><div class="T" style="left:498.00px;top:3.34px;font-size:12px;color:#fff;transform:scaleX(0.9139);">RR</div></div><div style="left:652px;top:742.5px;width:588px;height:17px;overflow:hidden"><div class="T" style="left:7.00px;top:3.34px;font-size:12px;color:#111;transform:scaleX(0.8926);font-weight:bold">Guseinov,Gadir</div><div class="T" style="left:128.60px;top:3.34px;font-size:12px;color:#333;transform:scaleX(0.9139);">2636</div><div class="T" style="left:180.00px;top:3.34px;font-size:12px;color:#111;transform:scaleX(0.8926);font-weight:bold">Georgiadis,Nico</div><div class="T" style="left:301.40px;top:3.34px;font-size:12px;color:#333;transform:scaleX(0.9139);">2547</div><div class="T" style="left:353.00px;top:3.34px;font-size:12px;color:#111;transform:scaleX(0.8926);font-weight:bold">1-0</div><div class="T" style="left:404.50px;top:3.34px;font-size:12px;color:#111;transform:scaleX(0.8926);font-weight:bold">C56</div></div><div style="left:652px;top:759.5px;width:588px;height:17px;overflow:hidden"><div class="T" style="left:7.00px;top:3.34px;font-size:12px;color:#111;transform:scaleX(0.8926);font-weight:bold">Huschenbeth,Niclas</div><div class="T" style="left:128.60px;top:3.34px;font-size:12px;color:#333;transform:scaleX(0.9139);">2624</div><div class="T" style="left:180.00px;top:3.34px;font-size:12px;color:#111;transform:scaleX(0.8926);font-weight:bold">Dubov,Daniil</div><div class="T" style="left:301.40px;top:3.34px;font-size:12px;color:#333;transform:scaleX(0.9139);">2699</div><div class="T" style="left:353.00px;top:3.34px;font-size:12px;color:#111;transform:scaleX(0.8926);font-weight:bold">0-1</div><div class="T" style="left:404.50px;top:3.34px;font-size:12px;color:#111;transform:scaleX(0.8926);font-weight:bold">C56</div></div><div style="left:652px;top:776.5px;width:588px;height:17px;overflow:hidden"><div class="T" style="left:7.00px;top:3.34px;font-size:12px;color:#111;transform:scaleX(0.8926);font-weight:bold">Guseinov,Gadir</div><div class="T" style="left:128.60px;top:3.34px;font-size:12px;color:#333;transform:scaleX(0.9139);">2661</div><div class="T" style="left:180.00px;top:3.34px;font-size:12px;color:#111;transform:scaleX(0.8926);font-weight:bold">Aditya,Mittal</div><div class="T" style="left:301.40px;top:3.34px;font-size:12px;color:#333;transform:scaleX(0.9139);">2505</div><div class="T" style="left:353.00px;top:3.34px;font-size:12px;color:#111;transform:scaleX(0.8926);font-weight:bold">0-1</div><div class="T" style="left:404.50px;top:3.34px;font-size:12px;color:#111;transform:scaleX(0.8926);font-weight:bold">C56</div></div><div style="left:652px;top:793.5px;width:588px;height:8.5px;overflow:hidden"><div class="T" style="left:7.00px;top:3.34px;font-size:12px;color:#111;transform:scaleX(0.8926);font-weight:bold">Sargsyan,Artur</div><div class="T" style="left:128.60px;top:3.34px;font-size:12px;color:#333;transform:scaleX(0.9139);">2363</div><div class="T" style="left:180.00px;top:3.34px;font-size:12px;color:#111;transform:scaleX(0.8926);font-weight:bold">Dubov,Daniil</div><div class="T" style="left:301.40px;top:3.34px;font-size:12px;color:#333;transform:scaleX(0.9139);">2701</div><div class="T" style="left:353.00px;top:3.34px;font-size:12px;color:#111;transform:scaleX(0.8926);font-weight:bold">0-1</div><div class="T" style="left:404.50px;top:3.34px;font-size:12px;color:#111;transform:scaleX(0.8926);font-weight:bold">C56</div></div><div style="left:1240px;top:671px;width:15px;height:131px;background:#f4f4f6"></div><div style="left:1246px;top:688px;width:4px;height:16px;background:#8a8a8a;border-radius:2px"></div><div style="left:652px;top:802px;width:603px;height:15px;background:#f0f0f2"></div><div style="left:668px;top:809px;width:545px;height:4px;background:#8a8a8a;border-radius:2px"></div><div style="left:1255px;top:670px;width:6px;height:147px;background:#efeff1"></div><div style="left:1261px;top:671px;width:177px;height:146px;background:linear-gradient(to bottom right,#36446c,#6f7ca4)"></div><div style="left:1287px;top:681px;width:125px;height:125px;background:#3a435d;box-shadow:2px 3px 5px rgba(25,30,50,0.45)"></div><div style="left:1289.00px;top:682.70px;width:15.65px;height:15.65px;background:#ececec"></div><div style="left:1304.15px;top:682.70px;width:15.65px;height:15.65px;background:#7d90c0"></div><div style="left:1319.30px;top:682.70px;width:15.65px;height:15.65px;background:#ececec"></div><div style="left:1334.45px;top:682.70px;width:15.65px;height:15.65px;background:#7d90c0"></div><div style="left:1349.60px;top:682.70px;width:15.65px;height:15.65px;background:#ececec"></div><div style="left:1364.75px;top:682.70px;width:15.65px;height:15.65px;background:#7d90c0"></div><div style="left:1379.90px;top:682.70px;width:15.65px;height:15.65px;background:#ececec"></div><div style="left:1395.05px;top:682.70px;width:15.65px;height:15.65px;background:#7d90c0"></div><div style="left:1289.00px;top:697.85px;width:15.65px;height:15.65px;background:#7d90c0"></div><div style="left:1304.15px;top:697.85px;width:15.65px;height:15.65px;background:#ececec"></div><div style="left:1319.30px;top:697.85px;width:15.65px;height:15.65px;background:#7d90c0"></div><div style="left:1334.45px;top:697.85px;width:15.65px;height:15.65px;background:#ececec"></div><div style="left:1349.60px;top:697.85px;width:15.65px;height:15.65px;background:#7d90c0"></div><div style="left:1364.75px;top:697.85px;width:15.65px;height:15.65px;background:#ececec"></div><div style="left:1379.90px;top:697.85px;width:15.65px;height:15.65px;background:#7d90c0"></div><div style="left:1395.05px;top:697.85px;width:15.65px;height:15.65px;background:#ececec"></div><div style="left:1289.00px;top:713.00px;width:15.65px;height:15.65px;background:#ececec"></div><div style="left:1304.15px;top:713.00px;width:15.65px;height:15.65px;background:#7d90c0"></div><div style="left:1319.30px;top:713.00px;width:15.65px;height:15.65px;background:#ececec"></div><div style="left:1334.45px;top:713.00px;width:15.65px;height:15.65px;background:#7d90c0"></div><div style="left:1349.60px;top:713.00px;width:15.65px;height:15.65px;background:#ececec"></div><div style="left:1364.75px;top:713.00px;width:15.65px;height:15.65px;background:#7d90c0"></div><div style="left:1379.90px;top:713.00px;width:15.65px;height:15.65px;background:#ececec"></div><div style="left:1395.05px;top:713.00px;width:15.65px;height:15.65px;background:#7d90c0"></div><div style="left:1289.00px;top:728.15px;width:15.65px;height:15.65px;background:#7d90c0"></div><div style="left:1304.15px;top:728.15px;width:15.65px;height:15.65px;background:#ececec"></div><div style="left:1319.30px;top:728.15px;width:15.65px;height:15.65px;background:#7d90c0"></div><div style="left:1334.45px;top:728.15px;width:15.65px;height:15.65px;background:#ececec"></div><div style="left:1349.60px;top:728.15px;width:15.65px;height:15.65px;background:#7d90c0"></div><div style="left:1364.75px;top:728.15px;width:15.65px;height:15.65px;background:#ececec"></div><div style="left:1379.90px;top:728.15px;width:15.65px;height:15.65px;background:#7d90c0"></div><div style="left:1395.05px;top:728.15px;width:15.65px;height:15.65px;background:#ececec"></div><div style="left:1289.00px;top:743.30px;width:15.65px;height:15.65px;background:#ececec"></div><div style="left:1304.15px;top:743.30px;width:15.65px;height:15.65px;background:#7d90c0"></div><div style="left:1319.30px;top:743.30px;width:15.65px;height:15.65px;background:#ececec"></div><div style="left:1334.45px;top:743.30px;width:15.65px;height:15.65px;background:#7d90c0"></div><div style="left:1349.60px;top:743.30px;width:15.65px;height:15.65px;background:#ececec"></div><div style="left:1364.75px;top:743.30px;width:15.65px;height:15.65px;background:#7d90c0"></div><div style="left:1379.90px;top:743.30px;width:15.65px;height:15.65px;background:#ececec"></div><div style="left:1395.05px;top:743.30px;width:15.65px;height:15.65px;background:#7d90c0"></div><div style="left:1289.00px;top:758.45px;width:15.65px;height:15.65px;background:#7d90c0"></div><div style="left:1304.15px;top:758.45px;width:15.65px;height:15.65px;background:#ececec"></div><div style="left:1319.30px;top:758.45px;width:15.65px;height:15.65px;background:#7d90c0"></div><div style="left:1334.45px;top:758.45px;width:15.65px;height:15.65px;background:#ececec"></div><div style="left:1349.60px;top:758.45px;width:15.65px;height:15.65px;background:#7d90c0"></div><div style="left:1364.75px;top:758.45px;width:15.65px;height:15.65px;background:#ececec"></div><div style="left:1379.90px;top:758.45px;width:15.65px;height:15.65px;background:#7d90c0"></div><div style="left:1395.05px;top:758.45px;width:15.65px;height:15.65px;background:#ececec"></div><div style="left:1289.00px;top:773.60px;width:15.65px;height:15.65px;background:#ececec"></div><div style="left:1304.15px;top:773.60px;width:15.65px;height:15.65px;background:#7d90c0"></div><div style="left:1319.30px;top:773.60px;width:15.65px;height:15.65px;background:#ececec"></div><div style="left:1334.45px;top:773.60px;width:15.65px;height:15.65px;background:#7d90c0"></div><div style="left:1349.60px;top:773.60px;width:15.65px;height:15.65px;background:#ececec"></div><div style="left:1364.75px;top:773.60px;width:15.65px;height:15.65px;background:#7d90c0"></div><div style="left:1379.90px;top:773.60px;width:15.65px;height:15.65px;background:#ececec"></div><div style="left:1395.05px;top:773.60px;width:15.65px;height:15.65px;background:#7d90c0"></div><div style="left:1289.00px;top:788.75px;width:15.65px;height:15.65px;background:#7d90c0"></div><div style="left:1304.15px;top:788.75px;width:15.65px;height:15.65px;background:#ececec"></div><div style="left:1319.30px;top:788.75px;width:15.65px;height:15.65px;background:#7d90c0"></div><div style="left:1334.45px;top:788.75px;width:15.65px;height:15.65px;background:#ececec"></div><div style="left:1349.60px;top:788.75px;width:15.65px;height:15.65px;background:#7d90c0"></div><div style="left:1364.75px;top:788.75px;width:15.65px;height:15.65px;background:#ececec"></div><div style="left:1379.90px;top:788.75px;width:15.65px;height:15.65px;background:#7d90c0"></div><div style="left:1395.05px;top:788.75px;width:15.65px;height:15.65px;background:#ececec"></div><svg style="left:1288.62px;top:682.32px;" width="15.91" height="15.91"><use href="#bR"/></svg><svg style="left:1334.07px;top:682.32px;" width="15.91" height="15.91"><use href="#bQ"/></svg><svg style="left:1349.22px;top:682.32px;" width="15.91" height="15.91"><use href="#bK"/></svg><svg style="left:1394.67px;top:682.32px;" width="15.91" height="15.91"><use href="#bR"/></svg><svg style="left:1288.62px;top:697.47px;" width="15.91" height="15.91"><use href="#bP"/></svg><svg style="left:1318.92px;top:697.47px;" width="15.91" height="15.91"><use href="#bP"/></svg><svg style="left:1334.07px;top:697.47px;" width="15.91" height="15.91"><use href="#bB"/></svg><svg style="left:1349.22px;top:697.47px;" width="15.91" height="15.91"><use href="#bB"/></svg><svg style="left:1364.37px;top:697.47px;" width="15.91" height="15.91"><use href="#bP"/></svg><svg style="left:1379.52px;top:697.47px;" width="15.91" height="15.91"><use href="#bP"/></svg><svg style="left:1394.67px;top:697.47px;" width="15.91" height="15.91"><use href="#bP"/></svg><svg style="left:1318.92px;top:712.62px;" width="15.91" height="15.91"><use href="#bP"/></svg><svg style="left:1334.07px;top:727.77px;" width="15.91" height="15.91"><use href="#bP"/></svg><svg style="left:1349.22px;top:727.77px;" width="15.91" height="15.91"><use href="#wP"/></svg><svg style="left:1334.07px;top:742.92px;" width="15.91" height="15.91"><use href="#wN"/></svg><svg style="left:1349.22px;top:742.92px;" width="15.91" height="15.91"><use href="#bN"/></svg><svg style="left:1364.37px;top:758.07px;" width="15.91" height="15.91"><use href="#wP"/></svg><svg style="left:1288.62px;top:773.22px;" width="15.91" height="15.91"><use href="#wP"/></svg><svg style="left:1303.77px;top:773.22px;" width="15.91" height="15.91"><use href="#wP"/></svg><svg style="left:1318.92px;top:773.22px;" width="15.91" height="15.91"><use href="#wP"/></svg><svg style="left:1379.52px;top:773.22px;" width="15.91" height="15.91"><use href="#wP"/></svg><svg style="left:1394.67px;top:773.22px;" width="15.91" height="15.91"><use href="#wP"/></svg><svg style="left:1288.62px;top:788.37px;" width="15.91" height="15.91"><use href="#wR"/></svg><svg style="left:1303.77px;top:788.37px;" width="15.91" height="15.91"><use href="#wN"/></svg><svg style="left:1318.92px;top:788.37px;" width="15.91" height="15.91"><use href="#wB"/></svg><svg style="left:1334.07px;top:788.37px;" width="15.91" height="15.91"><use href="#wQ"/></svg><svg style="left:1364.37px;top:788.37px;" width="15.91" height="15.91"><use href="#wR"/></svg><svg style="left:1379.52px;top:788.37px;" width="15.91" height="15.91"><use href="#wK"/></svg><div style="left:1438px;top:670px;width:5px;height:147px;background:#efeff1"></div><div style="left:1443px;top:670px;width:1px;height:147px;background:#88888e"></div><div style="left:1444px;top:671px;width:156px;height:146px;background:#fff"></div><div class="T" style="left:1444.00px;top:674.66px;font-size:12.8px;color:#111;transform:scaleX(0.8954);white-space:pre"><b>Jones,Gawain C B</b> 2635 - <b>Naiditsch</b></div><div class="T" style="left:1444.00px;top:693.66px;font-size:12.8px;color:#111;transform:scaleX(0.8954);white-space:pre"><b>C56</b> Olympiad-42 [England-Germany]</div><div style="left:1444px;top:708.8px;width:156px;height:1.8px;background:#a6a6d8"></div><div class="T" style="left:1463.06px;top:718.66px;font-size:12.8px;color:#2a6a2a;transform:scaleX(0.9638);">was played earlier</div><div class="T" style="left:1463.00px;top:736.66px;font-size:12.8px;color:#2a6a2a;transform:scaleX(0.9507);">this summer.</div><div class="T" style="left:1539.00px;top:736.66px;font-size:12.8px;color:#222;transform:scaleX(0.9766);">]</div><div style="left:1444px;top:753.5px;width:33px;height:18px;background:#000"></div><div class="T" style="left:1447.30px;top:755.66px;font-size:12.8px;color:#fff;transform:scaleX(0.9094);">10.f3</div><div class="T" style="left:1480.90px;top:755.66px;font-size:12.8px;color:#111;transform:scaleX(0.8164);"><b>Sc5</b></div><div class="T" style="left:1463.00px;top:775.66px;font-size:12.8px;color:#111;transform:scaleX(0.9388);white-space:pre">[ 10...Sg5  11.f4  Se4</div><div style="left:1470px;top:787.5px;width:43.5px;height:1px;background:#333"></div><div style="left:1444px;top:796px;width:156px;height:2px;background:#222"></div><svg style="left:1454px;top:800px;opacity:0.55" width="16" height="16"><use href="#wN"/></svg><svg style="left:1536px;top:800px" width="16" height="16"><use href="#bB"/></svg></body></html>
